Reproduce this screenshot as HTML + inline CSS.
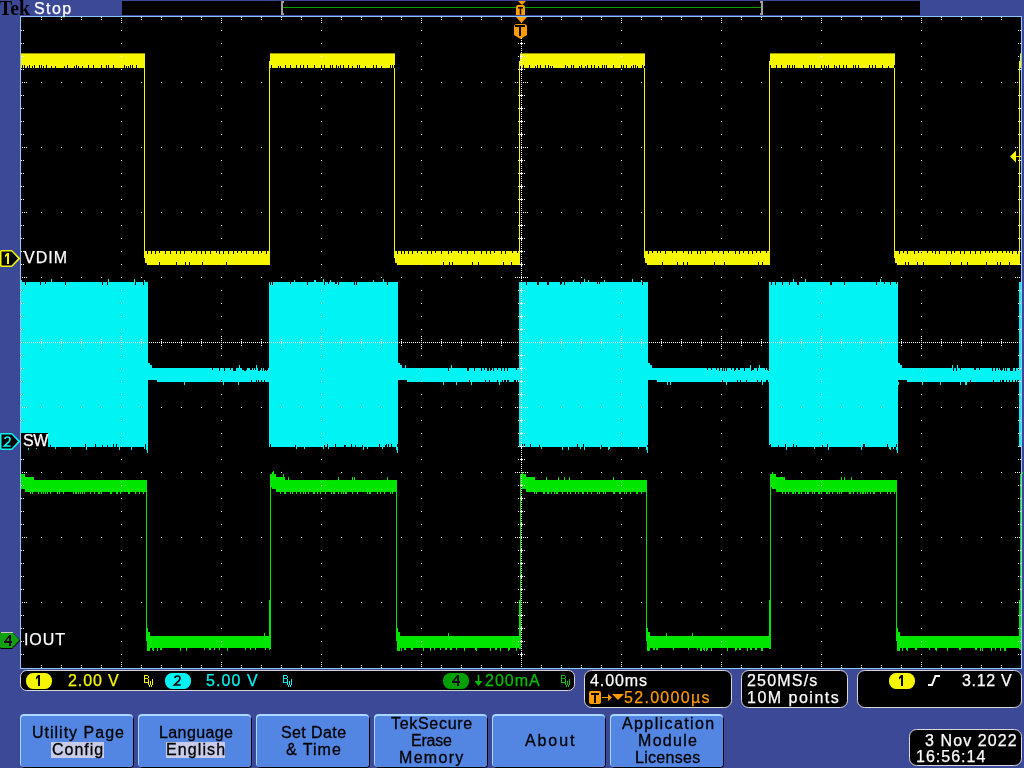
<!DOCTYPE html>
<html><head><meta charset="utf-8"><style>
html,body{margin:0;padding:0;}
body{width:1024px;height:768px;overflow:hidden;background:#3b4996;position:relative;}
svg{position:absolute;left:0;top:0;}
</style></head><body>
<svg width="1024" height="768" shape-rendering="crispEdges">
<rect x="122" y="1" width="798" height="14" fill="#000"/>
<rect x="283" y="7" width="478" height="1" fill="#00a000"/>
<path fill="#a49c98" d="M281 1h2v14h-2zM283 1h1v2h-1zM283 13h1v2h-1zM761 1h2v14h-2zM760 1h1v2h-1zM760 13h1v2h-1z"/>
<rect x="20" y="16" width="1002" height="653" fill="#8ec8f8"/>
<rect x="21" y="17" width="1000" height="651" fill="#000"/>
<path fill="#f6f600" d="M21 54h124v14h-124zM270 54h125v14h-125zM520 54h125v14h-125zM770 54h125v14h-125zM1020 54h1v14h-1zM146 251h123v14h-123zM396 251h123v14h-123zM646 251h123v14h-123zM896 251h123v14h-123zM144 54h1v204h-1zM145 251h1v12h-1zM394 54h1v204h-1zM395 251h1v12h-1zM644 54h1v204h-1zM645 251h1v12h-1zM894 54h1v204h-1zM895 251h1v12h-1zM269 61h1v204h-1zM270 56h1v5h-1zM270 54h1v2h-1zM519 61h1v204h-1zM520 56h1v5h-1zM520 54h1v2h-1zM769 61h1v204h-1zM770 56h1v5h-1zM770 54h1v2h-1zM1019 61h1v204h-1zM1020 56h1v5h-1zM1020 54h1v2h-1z"/>
<path fill="#9a9a00" d="M21 53h124v1h-124zM270 53h125v1h-125zM520 53h125v1h-125zM770 53h125v1h-125zM1020 53h1v1h-1z"/>
<path fill="#000" d="M22 65h1v3h-1zM24 65h1v3h-1zM27 66h1v2h-1zM29 65h1v3h-1zM32 66h1v2h-1zM34 65h1v3h-1zM39 65h1v3h-1zM41 65h1v3h-1zM43 66h1v2h-1zM46 65h1v3h-1zM51 66h1v2h-1zM55 66h1v2h-1zM64 66h1v2h-1zM67 65h1v3h-1zM74 66h1v2h-1zM76 65h1v3h-1zM78 66h1v2h-1zM82 66h1v2h-1zM88 65h1v3h-1zM93 65h1v3h-1zM101 65h1v3h-1zM106 65h1v3h-1zM108 65h1v3h-1zM113 65h1v3h-1zM124 65h1v3h-1zM126 66h1v2h-1zM128 66h1v2h-1zM130 65h1v3h-1zM132 65h1v3h-1zM136 65h1v3h-1zM271 65h1v3h-1zM278 66h1v2h-1zM280 66h1v2h-1zM285 65h1v3h-1zM290 65h1v3h-1zM296 65h1v3h-1zM300 65h1v3h-1zM303 65h1v3h-1zM307 65h1v3h-1zM314 65h1v3h-1zM321 65h1v3h-1zM324 65h1v3h-1zM330 65h1v3h-1zM332 65h1v3h-1zM336 65h1v3h-1zM338 66h1v2h-1zM340 65h1v3h-1zM343 65h1v3h-1zM348 65h1v3h-1zM352 66h1v2h-1zM357 65h1v3h-1zM359 65h1v3h-1zM365 66h1v2h-1zM373 65h1v3h-1zM376 65h1v3h-1zM381 66h1v2h-1zM390 65h1v3h-1zM392 65h1v3h-1zM394 65h1v3h-1zM520 66h1v2h-1zM523 65h1v3h-1zM529 65h1v3h-1zM535 66h1v2h-1zM537 65h1v3h-1zM540 65h1v3h-1zM545 65h1v3h-1zM548 65h1v3h-1zM550 66h1v2h-1zM552 66h1v2h-1zM565 65h1v3h-1zM567 66h1v2h-1zM571 65h1v3h-1zM573 65h1v3h-1zM579 66h1v2h-1zM581 65h1v3h-1zM585 66h1v2h-1zM587 65h1v3h-1zM591 65h1v3h-1zM594 65h1v3h-1zM598 66h1v2h-1zM602 65h1v3h-1zM604 65h1v3h-1zM606 65h1v3h-1zM613 65h1v3h-1zM621 65h1v3h-1zM623 65h1v3h-1zM626 65h1v3h-1zM631 66h1v2h-1zM633 65h1v3h-1zM635 65h1v3h-1zM637 66h1v2h-1zM642 65h1v3h-1zM644 66h1v2h-1zM770 65h1v3h-1zM776 65h1v3h-1zM781 65h1v3h-1zM787 65h1v3h-1zM789 65h1v3h-1zM792 65h1v3h-1zM794 65h1v3h-1zM803 65h1v3h-1zM809 65h1v3h-1zM811 65h1v3h-1zM814 65h1v3h-1zM821 65h1v3h-1zM824 65h1v3h-1zM826 66h1v2h-1zM828 65h1v3h-1zM834 65h1v3h-1zM836 66h1v2h-1zM839 65h1v3h-1zM843 65h1v3h-1zM846 65h1v3h-1zM853 65h1v3h-1zM855 65h1v3h-1zM858 65h1v3h-1zM869 65h1v3h-1zM872 65h1v3h-1zM875 65h1v3h-1zM882 65h1v3h-1zM888 66h1v2h-1zM894 65h1v3h-1zM147 251h1v3h-1zM151 251h1v3h-1zM155 251h1v3h-1zM159 251h1v2h-1zM165 251h1v3h-1zM170 251h1v3h-1zM176 251h1v3h-1zM180 251h1v3h-1zM184 251h1v3h-1zM191 251h1v2h-1zM196 251h1v3h-1zM201 251h1v3h-1zM205 251h1v3h-1zM210 251h1v3h-1zM216 251h1v2h-1zM219 251h1v3h-1zM223 251h1v3h-1zM228 251h1v3h-1zM233 251h1v3h-1zM237 251h1v2h-1zM241 251h1v2h-1zM246 251h1v3h-1zM253 251h1v3h-1zM258 251h1v3h-1zM261 251h1v2h-1zM266 251h1v3h-1zM159 262h1v3h-1zM176 262h1v3h-1zM185 262h1v3h-1zM189 262h1v3h-1zM202 262h1v3h-1zM226 262h1v3h-1zM397 251h1v3h-1zM401 251h1v3h-1zM404 251h1v3h-1zM408 251h1v3h-1zM412 251h1v3h-1zM417 251h1v2h-1zM421 251h1v3h-1zM427 251h1v3h-1zM431 251h1v3h-1zM435 251h1v2h-1zM441 251h1v3h-1zM448 251h1v3h-1zM451 251h1v2h-1zM458 251h1v2h-1zM461 251h1v3h-1zM467 251h1v3h-1zM474 251h1v3h-1zM481 251h1v3h-1zM486 251h1v3h-1zM490 251h1v3h-1zM494 251h1v2h-1zM501 251h1v3h-1zM505 251h1v3h-1zM512 251h1v2h-1zM517 251h1v2h-1zM443 262h1v3h-1zM449 262h1v3h-1zM452 262h1v3h-1zM472 262h1v3h-1zM478 262h1v3h-1zM503 262h1v3h-1zM511 262h1v3h-1zM648 251h1v3h-1zM652 251h1v2h-1zM657 251h1v2h-1zM660 251h1v2h-1zM665 251h1v3h-1zM672 251h1v2h-1zM676 251h1v2h-1zM683 251h1v2h-1zM688 251h1v3h-1zM691 251h1v3h-1zM697 251h1v3h-1zM700 251h1v3h-1zM705 251h1v3h-1zM712 251h1v2h-1zM718 251h1v2h-1zM723 251h1v3h-1zM728 251h1v2h-1zM735 251h1v3h-1zM739 251h1v3h-1zM743 251h1v2h-1zM748 251h1v3h-1zM752 251h1v3h-1zM756 251h1v2h-1zM760 251h1v2h-1zM766 251h1v2h-1zM662 262h1v3h-1zM677 262h1v3h-1zM683 262h1v3h-1zM687 262h1v3h-1zM714 262h1v3h-1zM724 262h1v3h-1zM758 262h1v3h-1zM762 262h1v3h-1zM899 251h1v3h-1zM903 251h1v2h-1zM907 251h1v3h-1zM914 251h1v3h-1zM918 251h1v2h-1zM921 251h1v2h-1zM927 251h1v2h-1zM932 251h1v2h-1zM935 251h1v3h-1zM939 251h1v3h-1zM946 251h1v3h-1zM951 251h1v3h-1zM954 251h1v2h-1zM960 251h1v3h-1zM964 251h1v3h-1zM970 251h1v3h-1zM975 251h1v3h-1zM980 251h1v3h-1zM985 251h1v2h-1zM989 251h1v2h-1zM992 251h1v2h-1zM997 251h1v2h-1zM1002 251h1v2h-1zM1006 251h1v2h-1zM1009 251h1v2h-1zM1012 251h1v3h-1zM1017 251h1v3h-1zM905 262h1v3h-1zM908 262h1v3h-1zM917 262h1v3h-1zM923 262h1v3h-1zM950 262h1v3h-1zM961 262h1v3h-1zM967 262h1v3h-1zM986 262h1v3h-1zM997 262h1v3h-1zM1000 262h1v3h-1zM1009 262h1v3h-1zM146 263h1v2h-1zM396 263h1v2h-1zM646 263h1v2h-1zM896 263h1v2h-1z"/>
<path fill="#00f4f4" d="M21 282h127v165h-127zM21 280h1v2h-1zM28 447h1v3h-1zM36 447h1v2h-1zM51 279h1v3h-1zM55 447h1v2h-1zM70 447h1v2h-1zM86 447h1v3h-1zM108 279h1v3h-1zM119 447h1v3h-1zM131 447h1v3h-1zM134 279h1v3h-1zM144 280h1v2h-1zM144 447h1v2h-1zM147 440h1v13h-1zM146 444h1v6h-1zM269 282h129v165h-129zM294 280h1v2h-1zM296 447h1v2h-1zM304 447h1v2h-1zM314 280h1v2h-1zM315 280h1v2h-1zM323 279h1v3h-1zM323 447h1v2h-1zM328 447h1v2h-1zM330 280h1v2h-1zM363 447h1v3h-1zM367 447h1v2h-1zM373 280h1v2h-1zM382 447h1v2h-1zM383 279h1v3h-1zM397 440h1v13h-1zM396 444h1v6h-1zM519 282h129v165h-129zM541 447h1v2h-1zM562 447h1v3h-1zM568 447h1v3h-1zM573 280h1v2h-1zM580 447h1v2h-1zM584 279h1v3h-1zM584 447h1v3h-1zM588 280h1v2h-1zM600 447h1v2h-1zM604 280h1v2h-1zM608 447h1v3h-1zM609 447h1v2h-1zM632 279h1v3h-1zM638 447h1v2h-1zM641 280h1v2h-1zM647 440h1v13h-1zM646 444h1v6h-1zM769 282h129v165h-129zM786 447h1v3h-1zM793 279h1v3h-1zM805 279h1v3h-1zM814 447h1v2h-1zM828 447h1v3h-1zM861 447h1v3h-1zM880 279h1v3h-1zM889 447h1v2h-1zM890 447h1v3h-1zM893 447h1v2h-1zM897 440h1v13h-1zM896 444h1v6h-1zM1019 282h2v165h-2zM148 363h1v17h-1zM149 363h1v17h-1zM150 365h1v15h-1zM151 365h1v15h-1zM151 365h1v3h-1zM152 368h1v12h-1zM153 368h1v12h-1zM154 368h1v12h-1zM155 368h1v12h-1zM156 368h1v12h-1zM157 368h1v14h-1zM158 368h1v14h-1zM159 368h1v14h-1zM160 368h1v14h-1zM161 368h1v14h-1zM162 368h1v14h-1zM163 368h1v14h-1zM164 368h1v14h-1zM165 368h1v14h-1zM166 368h1v14h-1zM167 368h1v14h-1zM168 368h1v14h-1zM169 368h1v14h-1zM170 368h1v14h-1zM171 368h1v14h-1zM172 368h1v14h-1zM173 368h1v14h-1zM174 368h1v14h-1zM175 368h1v14h-1zM176 368h1v14h-1zM177 368h1v14h-1zM178 368h1v14h-1zM179 368h1v14h-1zM180 368h1v14h-1zM181 368h1v14h-1zM182 368h1v14h-1zM183 368h1v14h-1zM184 368h1v14h-1zM184 382h1v3h-1zM185 368h1v14h-1zM186 368h1v14h-1zM187 368h1v14h-1zM188 368h1v14h-1zM189 368h1v14h-1zM190 368h1v14h-1zM191 368h1v14h-1zM192 368h1v14h-1zM193 368h1v14h-1zM194 368h1v14h-1zM195 368h1v14h-1zM196 368h1v14h-1zM197 368h1v14h-1zM198 368h1v14h-1zM199 368h1v14h-1zM200 368h1v14h-1zM201 368h1v14h-1zM202 368h1v14h-1zM203 368h1v14h-1zM204 368h1v14h-1zM205 368h1v14h-1zM206 368h1v14h-1zM207 368h1v14h-1zM208 368h1v14h-1zM209 368h1v14h-1zM210 368h1v14h-1zM211 368h1v14h-1zM212 368h1v14h-1zM213 368h1v14h-1zM214 368h1v14h-1zM215 368h1v14h-1zM216 368h1v14h-1zM217 368h1v14h-1zM218 368h1v14h-1zM219 368h1v14h-1zM220 368h1v14h-1zM221 368h1v14h-1zM222 368h1v14h-1zM223 368h1v14h-1zM223 382h1v3h-1zM224 368h1v14h-1zM225 368h1v14h-1zM226 368h1v14h-1zM227 368h1v14h-1zM228 368h1v14h-1zM229 368h1v14h-1zM230 368h1v14h-1zM231 368h1v14h-1zM232 368h1v14h-1zM233 368h1v14h-1zM234 368h1v14h-1zM235 368h1v14h-1zM236 368h1v14h-1zM237 368h1v14h-1zM238 368h1v14h-1zM238 382h1v3h-1zM239 368h1v14h-1zM239 365h1v3h-1zM240 368h1v14h-1zM241 368h1v14h-1zM242 368h1v14h-1zM243 368h1v14h-1zM244 368h1v14h-1zM245 368h1v14h-1zM246 368h1v14h-1zM247 368h1v14h-1zM248 368h1v14h-1zM249 368h1v14h-1zM250 368h1v14h-1zM251 368h1v14h-1zM252 368h1v14h-1zM253 368h1v14h-1zM254 368h1v14h-1zM255 368h1v14h-1zM256 368h1v14h-1zM256 365h1v3h-1zM257 368h1v14h-1zM258 368h1v14h-1zM259 368h1v14h-1zM260 368h1v14h-1zM261 368h1v14h-1zM262 368h1v14h-1zM263 368h1v14h-1zM264 368h1v14h-1zM265 368h1v14h-1zM266 368h1v14h-1zM267 368h1v14h-1zM268 368h1v14h-1zM398 363h1v17h-1zM399 363h1v17h-1zM400 365h1v15h-1zM401 365h1v15h-1zM402 368h1v12h-1zM403 368h1v12h-1zM404 368h1v12h-1zM405 368h1v12h-1zM405 365h1v3h-1zM406 368h1v12h-1zM407 368h1v14h-1zM408 368h1v14h-1zM409 368h1v14h-1zM410 368h1v14h-1zM411 368h1v14h-1zM412 368h1v14h-1zM413 368h1v14h-1zM414 368h1v14h-1zM415 368h1v14h-1zM416 368h1v14h-1zM417 368h1v14h-1zM418 368h1v14h-1zM419 368h1v14h-1zM420 368h1v14h-1zM421 368h1v14h-1zM422 368h1v14h-1zM423 368h1v14h-1zM424 368h1v14h-1zM425 368h1v14h-1zM426 368h1v14h-1zM427 368h1v14h-1zM428 368h1v14h-1zM429 368h1v14h-1zM430 368h1v14h-1zM431 368h1v14h-1zM432 368h1v14h-1zM433 368h1v14h-1zM434 368h1v14h-1zM435 368h1v14h-1zM436 368h1v14h-1zM437 368h1v14h-1zM438 368h1v14h-1zM439 368h1v14h-1zM440 368h1v14h-1zM441 368h1v14h-1zM442 368h1v14h-1zM443 368h1v14h-1zM443 382h1v3h-1zM444 368h1v14h-1zM445 368h1v14h-1zM446 368h1v14h-1zM447 368h1v14h-1zM448 368h1v14h-1zM449 368h1v14h-1zM450 368h1v14h-1zM451 368h1v14h-1zM451 365h1v3h-1zM452 368h1v14h-1zM453 368h1v14h-1zM454 368h1v14h-1zM455 368h1v14h-1zM456 368h1v14h-1zM456 382h1v3h-1zM457 368h1v14h-1zM458 368h1v14h-1zM459 368h1v14h-1zM460 368h1v14h-1zM461 368h1v14h-1zM462 368h1v14h-1zM463 368h1v14h-1zM464 368h1v14h-1zM465 368h1v14h-1zM466 368h1v14h-1zM467 368h1v14h-1zM468 368h1v14h-1zM469 368h1v14h-1zM470 368h1v14h-1zM471 368h1v14h-1zM471 382h1v3h-1zM472 368h1v14h-1zM473 368h1v14h-1zM474 368h1v14h-1zM475 368h1v14h-1zM476 368h1v14h-1zM477 368h1v14h-1zM478 368h1v14h-1zM479 368h1v14h-1zM480 368h1v14h-1zM481 368h1v14h-1zM482 368h1v14h-1zM483 368h1v14h-1zM484 368h1v14h-1zM485 368h1v14h-1zM486 368h1v14h-1zM487 368h1v14h-1zM488 368h1v14h-1zM489 368h1v14h-1zM490 368h1v14h-1zM491 368h1v14h-1zM492 368h1v14h-1zM493 368h1v14h-1zM494 368h1v14h-1zM495 368h1v14h-1zM496 368h1v14h-1zM497 368h1v14h-1zM498 368h1v14h-1zM499 368h1v14h-1zM499 382h1v3h-1zM500 368h1v14h-1zM501 368h1v14h-1zM502 368h1v14h-1zM503 368h1v14h-1zM504 368h1v14h-1zM505 368h1v14h-1zM506 368h1v14h-1zM507 368h1v14h-1zM508 368h1v14h-1zM509 368h1v14h-1zM510 368h1v14h-1zM511 368h1v14h-1zM512 368h1v14h-1zM513 368h1v14h-1zM514 368h1v14h-1zM515 368h1v14h-1zM516 368h1v14h-1zM517 368h1v14h-1zM518 368h1v14h-1zM648 363h1v17h-1zM649 363h1v17h-1zM650 365h1v15h-1zM651 365h1v15h-1zM652 368h1v12h-1zM653 368h1v12h-1zM654 368h1v12h-1zM655 368h1v12h-1zM656 368h1v12h-1zM657 368h1v14h-1zM658 368h1v14h-1zM659 368h1v14h-1zM660 368h1v14h-1zM661 368h1v14h-1zM662 368h1v14h-1zM663 368h1v14h-1zM664 368h1v14h-1zM665 368h1v14h-1zM666 368h1v14h-1zM667 368h1v14h-1zM667 382h1v3h-1zM668 368h1v14h-1zM669 368h1v14h-1zM670 368h1v14h-1zM670 382h1v3h-1zM671 368h1v14h-1zM672 368h1v14h-1zM673 368h1v14h-1zM674 368h1v14h-1zM675 368h1v14h-1zM676 368h1v14h-1zM677 368h1v14h-1zM678 368h1v14h-1zM679 368h1v14h-1zM680 368h1v14h-1zM681 368h1v14h-1zM682 368h1v14h-1zM683 368h1v14h-1zM684 368h1v14h-1zM685 368h1v14h-1zM686 368h1v14h-1zM687 368h1v14h-1zM688 368h1v14h-1zM689 368h1v14h-1zM690 368h1v14h-1zM691 368h1v14h-1zM692 368h1v14h-1zM693 368h1v14h-1zM694 368h1v14h-1zM695 368h1v14h-1zM696 368h1v14h-1zM697 368h1v14h-1zM698 368h1v14h-1zM699 368h1v14h-1zM700 368h1v14h-1zM701 368h1v14h-1zM702 368h1v14h-1zM703 368h1v14h-1zM704 368h1v14h-1zM705 368h1v14h-1zM706 368h1v14h-1zM707 368h1v14h-1zM708 368h1v14h-1zM709 368h1v14h-1zM710 368h1v14h-1zM711 368h1v14h-1zM712 368h1v14h-1zM713 368h1v14h-1zM714 368h1v14h-1zM715 368h1v14h-1zM716 368h1v14h-1zM717 368h1v14h-1zM718 368h1v14h-1zM719 368h1v14h-1zM720 368h1v14h-1zM721 368h1v14h-1zM722 368h1v14h-1zM723 368h1v14h-1zM724 368h1v14h-1zM725 368h1v14h-1zM726 368h1v14h-1zM726 382h1v3h-1zM727 368h1v14h-1zM728 368h1v14h-1zM729 368h1v14h-1zM730 368h1v14h-1zM731 368h1v14h-1zM732 368h1v14h-1zM733 368h1v14h-1zM734 368h1v14h-1zM735 368h1v14h-1zM736 368h1v14h-1zM737 368h1v14h-1zM738 368h1v14h-1zM739 368h1v14h-1zM740 368h1v14h-1zM741 368h1v14h-1zM742 368h1v14h-1zM743 368h1v14h-1zM744 368h1v14h-1zM745 368h1v14h-1zM746 368h1v14h-1zM747 368h1v14h-1zM748 368h1v14h-1zM749 368h1v14h-1zM750 368h1v14h-1zM750 365h1v3h-1zM751 368h1v14h-1zM752 368h1v14h-1zM753 368h1v14h-1zM754 368h1v14h-1zM755 368h1v14h-1zM756 368h1v14h-1zM757 368h1v14h-1zM758 368h1v14h-1zM759 368h1v14h-1zM759 365h1v3h-1zM760 368h1v14h-1zM761 368h1v14h-1zM762 368h1v14h-1zM762 382h1v3h-1zM763 368h1v14h-1zM764 368h1v14h-1zM765 368h1v14h-1zM766 368h1v14h-1zM767 368h1v14h-1zM768 368h1v14h-1zM898 363h1v17h-1zM898 382h1v3h-1zM899 363h1v17h-1zM900 365h1v15h-1zM901 365h1v15h-1zM902 368h1v12h-1zM903 368h1v12h-1zM904 368h1v12h-1zM905 368h1v12h-1zM906 368h1v12h-1zM907 368h1v14h-1zM908 368h1v14h-1zM909 368h1v14h-1zM910 368h1v14h-1zM911 368h1v14h-1zM912 368h1v14h-1zM913 368h1v14h-1zM914 368h1v14h-1zM915 368h1v14h-1zM916 368h1v14h-1zM917 368h1v14h-1zM918 368h1v14h-1zM919 368h1v14h-1zM920 368h1v14h-1zM921 368h1v14h-1zM922 368h1v14h-1zM922 382h1v3h-1zM923 368h1v14h-1zM924 368h1v14h-1zM925 368h1v14h-1zM926 368h1v14h-1zM927 368h1v14h-1zM928 368h1v14h-1zM929 368h1v14h-1zM930 368h1v14h-1zM931 368h1v14h-1zM932 368h1v14h-1zM933 368h1v14h-1zM934 368h1v14h-1zM935 368h1v14h-1zM936 368h1v14h-1zM937 368h1v14h-1zM938 368h1v14h-1zM939 368h1v14h-1zM940 368h1v14h-1zM940 382h1v3h-1zM941 368h1v14h-1zM942 368h1v14h-1zM943 368h1v14h-1zM944 368h1v14h-1zM945 368h1v14h-1zM946 368h1v14h-1zM947 368h1v14h-1zM948 368h1v14h-1zM949 368h1v14h-1zM950 368h1v14h-1zM951 368h1v14h-1zM952 368h1v14h-1zM952 365h1v3h-1zM953 368h1v14h-1zM954 368h1v14h-1zM955 368h1v14h-1zM956 368h1v14h-1zM957 368h1v14h-1zM957 365h1v3h-1zM958 368h1v14h-1zM959 368h1v14h-1zM960 368h1v14h-1zM960 382h1v3h-1zM961 368h1v14h-1zM962 368h1v14h-1zM963 368h1v14h-1zM964 368h1v14h-1zM965 368h1v14h-1zM965 382h1v3h-1zM966 368h1v14h-1zM966 382h1v3h-1zM967 368h1v14h-1zM968 368h1v14h-1zM969 368h1v14h-1zM970 368h1v14h-1zM971 368h1v14h-1zM972 368h1v14h-1zM973 368h1v14h-1zM974 368h1v14h-1zM975 368h1v14h-1zM976 368h1v14h-1zM977 368h1v14h-1zM978 368h1v14h-1zM979 368h1v14h-1zM980 368h1v14h-1zM981 368h1v14h-1zM982 368h1v14h-1zM983 368h1v14h-1zM984 368h1v14h-1zM985 368h1v14h-1zM986 368h1v14h-1zM987 368h1v14h-1zM988 368h1v14h-1zM989 368h1v14h-1zM990 368h1v14h-1zM991 368h1v14h-1zM992 368h1v14h-1zM993 368h1v14h-1zM994 368h1v14h-1zM995 368h1v14h-1zM996 368h1v14h-1zM997 368h1v14h-1zM998 368h1v14h-1zM999 368h1v14h-1zM1000 368h1v14h-1zM1001 368h1v14h-1zM1002 368h1v14h-1zM1003 368h1v14h-1zM1004 368h1v14h-1zM1005 368h1v14h-1zM1006 368h1v14h-1zM1007 368h1v14h-1zM1008 368h1v14h-1zM1009 368h1v14h-1zM1010 368h1v14h-1zM1011 368h1v14h-1zM1012 368h1v14h-1zM1013 368h1v14h-1zM1014 368h1v14h-1zM1015 368h1v14h-1zM1016 368h1v14h-1zM1017 368h1v14h-1zM1018 368h1v14h-1z"/>
<path fill="#000" d="M24 445h1v2h-1zM25 282h1v3h-1zM25 444h1v3h-1zM35 444h1v3h-1zM40 282h1v3h-1zM45 282h1v2h-1zM50 445h1v2h-1zM65 282h1v3h-1zM85 444h1v3h-1zM95 444h1v3h-1zM102 282h1v3h-1zM102 445h1v2h-1zM107 282h1v3h-1zM107 445h1v2h-1zM113 444h1v3h-1zM116 444h1v3h-1zM135 282h1v3h-1zM143 282h1v3h-1zM145 444h1v3h-1zM270 282h1v3h-1zM270 444h1v3h-1zM272 282h1v3h-1zM290 282h1v2h-1zM295 445h1v2h-1zM307 282h1v3h-1zM324 282h1v3h-1zM324 445h1v2h-1zM327 444h1v3h-1zM328 282h1v2h-1zM335 282h1v2h-1zM335 444h1v3h-1zM336 282h1v2h-1zM338 282h1v3h-1zM344 445h1v2h-1zM345 445h1v2h-1zM351 444h1v3h-1zM354 282h1v3h-1zM355 445h1v2h-1zM356 282h1v3h-1zM362 445h1v2h-1zM379 444h1v3h-1zM385 445h1v2h-1zM386 444h1v3h-1zM387 282h1v3h-1zM388 444h1v3h-1zM391 444h1v3h-1zM397 444h1v3h-1zM522 444h1v3h-1zM524 444h1v3h-1zM526 282h1v3h-1zM530 444h1v3h-1zM537 282h1v3h-1zM538 282h1v3h-1zM539 445h1v2h-1zM547 282h1v3h-1zM548 282h1v3h-1zM560 282h1v3h-1zM561 282h1v2h-1zM564 282h1v3h-1zM577 444h1v3h-1zM580 282h1v2h-1zM583 444h1v3h-1zM597 282h1v2h-1zM599 282h1v2h-1zM601 445h1v2h-1zM642 282h1v3h-1zM647 445h1v2h-1zM769 445h1v2h-1zM770 444h1v3h-1zM771 282h1v3h-1zM775 282h1v3h-1zM778 445h1v2h-1zM782 282h1v3h-1zM785 444h1v3h-1zM789 282h1v3h-1zM793 444h1v3h-1zM796 445h1v2h-1zM797 282h1v3h-1zM798 282h1v3h-1zM822 445h1v2h-1zM827 444h1v3h-1zM830 282h1v3h-1zM831 282h1v3h-1zM844 282h1v3h-1zM863 444h1v3h-1zM864 444h1v3h-1zM876 282h1v3h-1zM884 282h1v2h-1zM887 444h1v3h-1zM890 282h1v3h-1zM896 282h1v2h-1zM896 444h1v3h-1zM212 368h1v2h-1zM219 368h1v3h-1zM221 380h1v2h-1zM224 368h1v3h-1zM230 368h1v2h-1zM233 368h1v3h-1zM234 368h1v3h-1zM235 368h1v3h-1zM242 368h1v2h-1zM243 368h1v2h-1zM244 368h1v3h-1zM245 368h1v3h-1zM246 368h1v2h-1zM250 368h1v2h-1zM251 368h1v2h-1zM251 380h1v2h-1zM253 368h1v2h-1zM255 368h1v2h-1zM256 380h1v2h-1zM258 368h1v3h-1zM258 380h1v2h-1zM259 368h1v3h-1zM260 368h1v2h-1zM261 380h1v2h-1zM262 368h1v3h-1zM264 368h1v3h-1zM264 380h1v2h-1zM265 368h1v2h-1zM266 368h1v3h-1zM267 368h1v2h-1zM448 368h1v3h-1zM467 368h1v3h-1zM468 368h1v3h-1zM469 380h1v2h-1zM474 368h1v3h-1zM481 368h1v3h-1zM484 368h1v2h-1zM485 380h1v2h-1zM487 368h1v3h-1zM488 368h1v3h-1zM489 380h1v2h-1zM490 368h1v3h-1zM491 368h1v2h-1zM493 368h1v3h-1zM497 368h1v2h-1zM497 380h1v2h-1zM501 368h1v3h-1zM502 380h1v2h-1zM504 368h1v3h-1zM504 380h1v2h-1zM505 380h1v2h-1zM507 368h1v3h-1zM507 380h1v2h-1zM508 380h1v2h-1zM514 380h1v2h-1zM515 380h1v2h-1zM516 368h1v2h-1zM517 380h1v2h-1zM707 368h1v2h-1zM711 368h1v2h-1zM716 368h1v2h-1zM719 368h1v3h-1zM722 368h1v3h-1zM722 380h1v2h-1zM724 368h1v3h-1zM726 368h1v3h-1zM731 368h1v2h-1zM734 368h1v3h-1zM735 368h1v2h-1zM737 380h1v2h-1zM738 368h1v2h-1zM739 368h1v2h-1zM740 380h1v2h-1zM744 368h1v3h-1zM746 380h1v2h-1zM751 368h1v3h-1zM752 368h1v2h-1zM753 368h1v2h-1zM757 368h1v3h-1zM757 380h1v2h-1zM761 380h1v2h-1zM765 368h1v2h-1zM766 380h1v2h-1zM767 368h1v2h-1zM767 380h1v2h-1zM768 368h1v3h-1zM953 368h1v3h-1zM956 368h1v3h-1zM960 368h1v2h-1zM970 380h1v2h-1zM974 368h1v2h-1zM975 368h1v2h-1zM979 368h1v2h-1zM992 368h1v3h-1zM993 380h1v2h-1zM995 368h1v3h-1zM998 368h1v2h-1zM1000 368h1v2h-1zM1000 380h1v2h-1zM1001 368h1v3h-1zM1002 368h1v2h-1zM1002 380h1v2h-1zM1003 380h1v2h-1zM1004 368h1v3h-1zM1006 368h1v3h-1zM1006 380h1v2h-1zM1009 380h1v2h-1zM1010 368h1v3h-1zM1011 368h1v3h-1zM1012 368h1v3h-1zM1012 380h1v2h-1zM1015 368h1v3h-1zM1015 380h1v2h-1zM1017 380h1v2h-1zM1018 368h1v2h-1zM1018 380h1v2h-1z"/>
<path fill="#00e600" d="M21 474h1v15h-1zM22 474h1v15h-1zM23 474h1v15h-1zM24 474h1v15h-1zM25 477h1v15h-1zM26 477h1v15h-1zM27 477h1v15h-1zM28 477h1v15h-1zM29 477h1v15h-1zM30 477h1v15h-1zM30 492h1v2h-1zM31 477h1v15h-1zM32 477h1v15h-1zM32 492h1v2h-1zM33 477h1v15h-1zM34 480h1v12h-1zM35 480h1v12h-1zM36 480h1v12h-1zM37 480h1v12h-1zM38 480h1v12h-1zM38 492h1v2h-1zM39 480h1v12h-1zM40 480h1v12h-1zM41 480h1v12h-1zM41 492h1v2h-1zM42 480h1v12h-1zM43 480h1v12h-1zM43 492h1v2h-1zM44 480h1v12h-1zM45 480h1v12h-1zM45 492h1v2h-1zM46 480h1v12h-1zM47 480h1v12h-1zM47 492h1v2h-1zM48 480h1v12h-1zM49 480h1v12h-1zM50 480h1v12h-1zM50 492h1v2h-1zM51 480h1v12h-1zM52 480h1v12h-1zM53 480h1v12h-1zM54 480h1v12h-1zM55 480h1v12h-1zM56 480h1v12h-1zM57 480h1v12h-1zM57 492h1v2h-1zM58 480h1v12h-1zM59 480h1v12h-1zM59 492h1v2h-1zM60 480h1v12h-1zM61 480h1v12h-1zM62 480h1v12h-1zM63 480h1v12h-1zM63 492h1v2h-1zM64 480h1v12h-1zM65 480h1v12h-1zM66 480h1v12h-1zM67 480h1v12h-1zM68 480h1v12h-1zM69 480h1v12h-1zM70 480h1v12h-1zM71 480h1v12h-1zM72 480h1v12h-1zM73 480h1v12h-1zM73 492h1v2h-1zM74 480h1v12h-1zM75 480h1v12h-1zM75 492h1v2h-1zM76 480h1v12h-1zM76 492h1v2h-1zM77 480h1v12h-1zM78 480h1v12h-1zM78 492h1v2h-1zM79 480h1v12h-1zM80 480h1v12h-1zM80 492h1v2h-1zM81 480h1v12h-1zM82 480h1v12h-1zM82 492h1v2h-1zM83 480h1v12h-1zM84 480h1v12h-1zM84 492h1v2h-1zM85 480h1v12h-1zM86 480h1v12h-1zM87 480h1v12h-1zM88 480h1v12h-1zM89 480h1v12h-1zM90 480h1v12h-1zM90 492h1v2h-1zM91 480h1v12h-1zM92 480h1v12h-1zM93 480h1v12h-1zM94 480h1v12h-1zM94 492h1v2h-1zM95 480h1v12h-1zM96 480h1v12h-1zM97 480h1v12h-1zM98 480h1v12h-1zM98 492h1v2h-1zM99 480h1v12h-1zM99 492h1v2h-1zM100 480h1v12h-1zM101 480h1v12h-1zM101 492h1v2h-1zM102 480h1v12h-1zM103 480h1v12h-1zM104 480h1v12h-1zM105 480h1v12h-1zM106 480h1v12h-1zM107 480h1v12h-1zM108 480h1v12h-1zM109 480h1v12h-1zM110 480h1v12h-1zM110 492h1v2h-1zM111 480h1v12h-1zM111 492h1v2h-1zM112 480h1v12h-1zM113 480h1v12h-1zM114 480h1v12h-1zM115 480h1v12h-1zM116 480h1v12h-1zM116 492h1v2h-1zM117 480h1v12h-1zM117 492h1v2h-1zM118 480h1v12h-1zM119 480h1v12h-1zM120 480h1v12h-1zM120 492h1v2h-1zM121 480h1v12h-1zM122 480h1v12h-1zM123 480h1v12h-1zM124 480h1v12h-1zM125 480h1v12h-1zM126 480h1v12h-1zM127 480h1v12h-1zM128 480h1v12h-1zM128 492h1v2h-1zM129 480h1v12h-1zM129 492h1v2h-1zM130 480h1v12h-1zM131 480h1v12h-1zM132 480h1v12h-1zM133 480h1v12h-1zM134 480h1v12h-1zM135 480h1v12h-1zM135 492h1v2h-1zM136 480h1v12h-1zM137 480h1v12h-1zM138 480h1v12h-1zM139 480h1v12h-1zM139 492h1v2h-1zM140 480h1v12h-1zM141 480h1v12h-1zM142 480h1v12h-1zM143 480h1v12h-1zM143 492h1v2h-1zM144 480h1v12h-1zM145 480h1v12h-1zM146 480h1v12h-1zM271 474h1v13h-1zM272 474h1v15h-1zM273 474h1v15h-1zM273 471h1v3h-1zM274 474h1v15h-1zM275 474h1v15h-1zM276 477h1v15h-1zM277 477h1v15h-1zM278 477h1v15h-1zM279 477h1v15h-1zM280 477h1v15h-1zM280 492h1v2h-1zM281 477h1v15h-1zM282 477h1v15h-1zM283 477h1v15h-1zM283 474h1v3h-1zM284 477h1v15h-1zM284 492h1v2h-1zM285 480h1v12h-1zM285 492h1v2h-1zM286 480h1v12h-1zM287 480h1v12h-1zM288 480h1v12h-1zM288 477h1v3h-1zM289 480h1v12h-1zM290 480h1v12h-1zM290 492h1v2h-1zM291 480h1v12h-1zM292 480h1v12h-1zM292 492h1v2h-1zM293 480h1v12h-1zM294 480h1v12h-1zM295 480h1v12h-1zM296 480h1v12h-1zM296 492h1v2h-1zM297 480h1v12h-1zM298 480h1v12h-1zM299 480h1v12h-1zM300 480h1v12h-1zM300 492h1v2h-1zM301 480h1v12h-1zM302 480h1v12h-1zM303 480h1v12h-1zM303 492h1v2h-1zM304 480h1v12h-1zM305 480h1v12h-1zM305 492h1v2h-1zM306 480h1v12h-1zM307 480h1v12h-1zM308 480h1v12h-1zM308 492h1v2h-1zM309 480h1v12h-1zM310 480h1v12h-1zM311 480h1v12h-1zM312 480h1v12h-1zM313 480h1v12h-1zM313 492h1v2h-1zM314 480h1v12h-1zM314 492h1v2h-1zM315 480h1v12h-1zM316 480h1v12h-1zM317 480h1v12h-1zM317 492h1v2h-1zM318 480h1v12h-1zM319 480h1v12h-1zM320 480h1v12h-1zM320 492h1v2h-1zM321 480h1v12h-1zM322 480h1v12h-1zM323 480h1v12h-1zM324 480h1v12h-1zM325 480h1v12h-1zM325 492h1v2h-1zM326 480h1v12h-1zM327 480h1v12h-1zM328 480h1v12h-1zM329 480h1v12h-1zM330 480h1v12h-1zM331 480h1v12h-1zM331 492h1v2h-1zM332 480h1v12h-1zM333 480h1v12h-1zM333 492h1v2h-1zM334 480h1v12h-1zM334 492h1v2h-1zM335 480h1v12h-1zM336 480h1v12h-1zM337 480h1v12h-1zM338 480h1v12h-1zM338 492h1v2h-1zM338 477h1v3h-1zM339 480h1v12h-1zM340 480h1v12h-1zM341 480h1v12h-1zM341 492h1v2h-1zM342 480h1v12h-1zM343 480h1v12h-1zM343 492h1v2h-1zM344 480h1v12h-1zM345 480h1v12h-1zM345 492h1v2h-1zM346 480h1v12h-1zM346 492h1v2h-1zM347 480h1v12h-1zM348 480h1v12h-1zM349 480h1v12h-1zM350 480h1v12h-1zM351 480h1v12h-1zM352 480h1v12h-1zM352 492h1v2h-1zM352 477h1v3h-1zM353 480h1v12h-1zM354 480h1v12h-1zM354 477h1v3h-1zM355 480h1v12h-1zM356 480h1v12h-1zM357 480h1v12h-1zM357 492h1v2h-1zM358 480h1v12h-1zM359 480h1v12h-1zM360 480h1v12h-1zM361 480h1v12h-1zM362 480h1v12h-1zM363 480h1v12h-1zM364 480h1v12h-1zM365 480h1v12h-1zM366 480h1v12h-1zM367 480h1v12h-1zM367 492h1v2h-1zM368 480h1v12h-1zM369 480h1v12h-1zM369 492h1v2h-1zM370 480h1v12h-1zM370 492h1v2h-1zM371 480h1v12h-1zM372 480h1v12h-1zM373 480h1v12h-1zM374 480h1v12h-1zM375 480h1v12h-1zM376 480h1v12h-1zM377 480h1v12h-1zM377 492h1v2h-1zM378 480h1v12h-1zM379 480h1v12h-1zM380 480h1v12h-1zM380 492h1v2h-1zM381 480h1v12h-1zM382 480h1v12h-1zM383 480h1v12h-1zM384 480h1v12h-1zM384 492h1v2h-1zM385 480h1v12h-1zM386 480h1v12h-1zM387 480h1v12h-1zM387 477h1v3h-1zM388 480h1v12h-1zM389 480h1v12h-1zM390 480h1v12h-1zM390 492h1v2h-1zM391 480h1v12h-1zM392 480h1v12h-1zM392 492h1v2h-1zM393 480h1v12h-1zM394 480h1v12h-1zM395 480h1v12h-1zM396 480h1v12h-1zM521 474h1v13h-1zM522 474h1v15h-1zM523 474h1v15h-1zM524 474h1v15h-1zM525 474h1v15h-1zM526 477h1v15h-1zM527 477h1v15h-1zM528 477h1v15h-1zM529 477h1v15h-1zM530 477h1v15h-1zM531 477h1v15h-1zM532 477h1v15h-1zM533 477h1v15h-1zM534 477h1v15h-1zM534 492h1v2h-1zM535 480h1v12h-1zM536 480h1v12h-1zM536 492h1v2h-1zM537 480h1v12h-1zM538 480h1v12h-1zM539 480h1v12h-1zM540 480h1v12h-1zM541 480h1v12h-1zM542 480h1v12h-1zM543 480h1v12h-1zM543 492h1v2h-1zM544 480h1v12h-1zM544 492h1v2h-1zM545 480h1v12h-1zM546 480h1v12h-1zM546 477h1v3h-1zM547 480h1v12h-1zM547 492h1v2h-1zM548 480h1v12h-1zM548 492h1v2h-1zM549 480h1v12h-1zM550 480h1v12h-1zM551 480h1v12h-1zM551 492h1v2h-1zM552 480h1v12h-1zM553 480h1v12h-1zM554 480h1v12h-1zM554 492h1v2h-1zM555 480h1v12h-1zM556 480h1v12h-1zM556 492h1v2h-1zM557 480h1v12h-1zM557 492h1v2h-1zM558 480h1v12h-1zM558 477h1v3h-1zM559 480h1v12h-1zM560 480h1v12h-1zM561 480h1v12h-1zM562 480h1v12h-1zM562 492h1v2h-1zM563 480h1v12h-1zM564 480h1v12h-1zM564 477h1v3h-1zM565 480h1v12h-1zM566 480h1v12h-1zM567 480h1v12h-1zM567 492h1v2h-1zM568 480h1v12h-1zM569 480h1v12h-1zM569 477h1v3h-1zM570 480h1v12h-1zM570 492h1v2h-1zM571 480h1v12h-1zM572 480h1v12h-1zM573 480h1v12h-1zM574 480h1v12h-1zM575 480h1v12h-1zM575 492h1v2h-1zM576 480h1v12h-1zM577 480h1v12h-1zM578 480h1v12h-1zM578 492h1v2h-1zM579 480h1v12h-1zM580 480h1v12h-1zM581 480h1v12h-1zM582 480h1v12h-1zM582 492h1v2h-1zM583 480h1v12h-1zM583 492h1v2h-1zM584 480h1v12h-1zM585 480h1v12h-1zM586 480h1v12h-1zM587 480h1v12h-1zM587 492h1v2h-1zM588 480h1v12h-1zM589 480h1v12h-1zM590 480h1v12h-1zM591 480h1v12h-1zM591 492h1v2h-1zM592 480h1v12h-1zM593 480h1v12h-1zM594 480h1v12h-1zM595 480h1v12h-1zM596 480h1v12h-1zM597 480h1v12h-1zM597 492h1v2h-1zM598 480h1v12h-1zM599 480h1v12h-1zM599 492h1v2h-1zM600 480h1v12h-1zM601 480h1v12h-1zM602 480h1v12h-1zM603 480h1v12h-1zM603 492h1v2h-1zM604 480h1v12h-1zM605 480h1v12h-1zM605 492h1v2h-1zM606 480h1v12h-1zM607 480h1v12h-1zM608 480h1v12h-1zM609 480h1v12h-1zM610 480h1v12h-1zM611 480h1v12h-1zM612 480h1v12h-1zM613 480h1v12h-1zM613 492h1v2h-1zM613 477h1v3h-1zM614 480h1v12h-1zM614 492h1v2h-1zM615 480h1v12h-1zM616 480h1v12h-1zM617 480h1v12h-1zM618 480h1v12h-1zM619 480h1v12h-1zM619 492h1v2h-1zM620 480h1v12h-1zM620 492h1v2h-1zM621 480h1v12h-1zM622 480h1v12h-1zM623 480h1v12h-1zM624 480h1v12h-1zM624 492h1v2h-1zM625 480h1v12h-1zM626 480h1v12h-1zM626 492h1v2h-1zM627 480h1v12h-1zM628 480h1v12h-1zM629 480h1v12h-1zM630 480h1v12h-1zM630 492h1v2h-1zM631 480h1v12h-1zM632 480h1v12h-1zM633 480h1v12h-1zM634 480h1v12h-1zM635 480h1v12h-1zM636 480h1v12h-1zM636 492h1v2h-1zM637 480h1v12h-1zM637 492h1v2h-1zM638 480h1v12h-1zM639 480h1v12h-1zM640 480h1v12h-1zM641 480h1v12h-1zM641 492h1v2h-1zM642 480h1v12h-1zM643 480h1v12h-1zM644 480h1v12h-1zM645 480h1v12h-1zM646 480h1v12h-1zM646 492h1v2h-1zM771 474h1v13h-1zM772 474h1v15h-1zM773 474h1v15h-1zM774 474h1v15h-1zM775 474h1v15h-1zM776 477h1v15h-1zM777 477h1v15h-1zM778 477h1v15h-1zM779 477h1v15h-1zM780 477h1v15h-1zM781 477h1v15h-1zM782 477h1v15h-1zM782 492h1v2h-1zM783 477h1v15h-1zM784 477h1v15h-1zM785 480h1v12h-1zM785 492h1v2h-1zM786 480h1v12h-1zM787 480h1v12h-1zM788 480h1v12h-1zM788 492h1v2h-1zM789 480h1v12h-1zM790 480h1v12h-1zM791 480h1v12h-1zM792 480h1v12h-1zM792 492h1v2h-1zM793 480h1v12h-1zM793 492h1v2h-1zM794 480h1v12h-1zM795 480h1v12h-1zM795 492h1v2h-1zM796 480h1v12h-1zM797 480h1v12h-1zM798 480h1v12h-1zM798 492h1v2h-1zM799 480h1v12h-1zM799 492h1v2h-1zM800 480h1v12h-1zM801 480h1v12h-1zM801 492h1v2h-1zM802 480h1v12h-1zM803 480h1v12h-1zM804 480h1v12h-1zM805 480h1v12h-1zM805 492h1v2h-1zM806 480h1v12h-1zM807 480h1v12h-1zM807 492h1v2h-1zM808 480h1v12h-1zM808 492h1v2h-1zM809 480h1v12h-1zM810 480h1v12h-1zM811 480h1v12h-1zM812 480h1v12h-1zM812 492h1v2h-1zM813 480h1v12h-1zM814 480h1v12h-1zM814 492h1v2h-1zM815 480h1v12h-1zM816 480h1v12h-1zM817 480h1v12h-1zM818 480h1v12h-1zM818 492h1v2h-1zM819 480h1v12h-1zM819 492h1v2h-1zM820 480h1v12h-1zM821 480h1v12h-1zM821 492h1v2h-1zM822 480h1v12h-1zM823 480h1v12h-1zM824 480h1v12h-1zM825 480h1v12h-1zM826 480h1v12h-1zM826 492h1v2h-1zM827 480h1v12h-1zM827 492h1v2h-1zM828 480h1v12h-1zM829 480h1v12h-1zM829 492h1v2h-1zM830 480h1v12h-1zM831 480h1v12h-1zM832 480h1v12h-1zM832 492h1v2h-1zM833 480h1v12h-1zM834 480h1v12h-1zM835 480h1v12h-1zM836 480h1v12h-1zM837 480h1v12h-1zM837 492h1v2h-1zM838 480h1v12h-1zM839 480h1v12h-1zM839 492h1v2h-1zM840 480h1v12h-1zM841 480h1v12h-1zM841 492h1v2h-1zM841 477h1v3h-1zM842 480h1v12h-1zM843 480h1v12h-1zM844 480h1v12h-1zM844 477h1v3h-1zM845 480h1v12h-1zM846 480h1v12h-1zM847 480h1v12h-1zM848 480h1v12h-1zM849 480h1v12h-1zM849 492h1v2h-1zM850 480h1v12h-1zM850 492h1v2h-1zM851 480h1v12h-1zM851 477h1v3h-1zM852 480h1v12h-1zM853 480h1v12h-1zM853 492h1v2h-1zM854 480h1v12h-1zM855 480h1v12h-1zM856 480h1v12h-1zM857 480h1v12h-1zM857 492h1v2h-1zM858 480h1v12h-1zM859 480h1v12h-1zM860 480h1v12h-1zM860 492h1v2h-1zM861 480h1v12h-1zM862 480h1v12h-1zM862 492h1v2h-1zM863 480h1v12h-1zM863 492h1v2h-1zM864 480h1v12h-1zM865 480h1v12h-1zM865 492h1v2h-1zM866 480h1v12h-1zM867 480h1v12h-1zM867 492h1v2h-1zM868 480h1v12h-1zM869 480h1v12h-1zM870 480h1v12h-1zM870 492h1v2h-1zM871 480h1v12h-1zM872 480h1v12h-1zM873 480h1v12h-1zM873 492h1v2h-1zM874 480h1v12h-1zM874 492h1v2h-1zM875 480h1v12h-1zM876 480h1v12h-1zM877 480h1v12h-1zM878 480h1v12h-1zM879 480h1v12h-1zM880 480h1v12h-1zM880 492h1v2h-1zM881 480h1v12h-1zM882 480h1v12h-1zM883 480h1v12h-1zM884 480h1v12h-1zM885 480h1v12h-1zM886 480h1v12h-1zM887 480h1v12h-1zM887 492h1v2h-1zM888 480h1v12h-1zM889 480h1v12h-1zM890 480h1v12h-1zM890 492h1v2h-1zM891 480h1v12h-1zM892 480h1v12h-1zM893 480h1v12h-1zM894 480h1v12h-1zM894 492h1v2h-1zM895 480h1v12h-1zM896 480h1v12h-1zM896 492h1v2h-1zM148 636h123v12h-123zM152 648h1v2h-1zM153 648h1v3h-1zM157 648h1v3h-1zM160 648h1v2h-1zM161 648h1v2h-1zM180 648h1v3h-1zM186 648h1v3h-1zM204 648h1v2h-1zM209 648h1v2h-1zM210 648h1v2h-1zM214 648h1v2h-1zM219 648h1v2h-1zM227 648h1v3h-1zM245 648h1v2h-1zM250 648h1v2h-1zM255 648h1v2h-1zM264 633h1v3h-1zM265 648h1v2h-1zM269 648h1v2h-1zM398 636h123v12h-123zM401 648h1v3h-1zM404 648h1v2h-1zM405 648h1v2h-1zM411 648h1v2h-1zM412 648h1v2h-1zM423 648h1v3h-1zM430 648h1v3h-1zM434 648h1v2h-1zM440 648h1v2h-1zM445 648h1v2h-1zM446 648h1v2h-1zM448 633h1v3h-1zM450 648h1v2h-1zM451 648h1v2h-1zM456 648h1v2h-1zM464 648h1v3h-1zM475 648h1v2h-1zM476 648h1v3h-1zM490 648h1v3h-1zM495 648h1v2h-1zM496 648h1v2h-1zM500 648h1v3h-1zM508 648h1v3h-1zM509 648h1v2h-1zM516 648h1v3h-1zM648 636h123v12h-123zM653 648h1v2h-1zM654 648h1v2h-1zM656 648h1v2h-1zM657 648h1v2h-1zM666 633h1v3h-1zM673 648h1v2h-1zM688 648h1v2h-1zM692 633h1v3h-1zM697 648h1v2h-1zM700 648h1v3h-1zM701 648h1v3h-1zM703 648h1v2h-1zM704 648h1v3h-1zM706 648h1v3h-1zM707 648h1v2h-1zM711 648h1v3h-1zM727 648h1v3h-1zM735 648h1v3h-1zM736 648h1v2h-1zM739 648h1v2h-1zM740 648h1v2h-1zM747 648h1v3h-1zM750 648h1v2h-1zM751 648h1v2h-1zM755 648h1v2h-1zM756 648h1v2h-1zM761 648h1v3h-1zM762 648h1v3h-1zM898 636h123v12h-123zM902 648h1v3h-1zM906 648h1v2h-1zM907 648h1v3h-1zM915 648h1v2h-1zM916 648h1v2h-1zM929 648h1v2h-1zM935 648h1v2h-1zM936 648h1v3h-1zM947 648h1v3h-1zM959 648h1v2h-1zM960 648h1v2h-1zM975 648h1v2h-1zM976 648h1v2h-1zM980 648h1v3h-1zM982 648h1v3h-1zM991 648h1v3h-1zM995 648h1v2h-1zM1000 648h1v3h-1zM1004 648h1v3h-1zM1005 648h1v3h-1zM1020 648h1v2h-1zM146 486h1v155h-1zM147 628h1v23h-1zM148 632h2v19h-2zM396 486h1v155h-1zM397 628h1v23h-1zM398 632h2v19h-2zM646 486h1v155h-1zM647 628h1v23h-1zM648 632h2v19h-2zM896 486h1v155h-1zM897 628h1v23h-1zM898 632h2v19h-2zM270 474h1v175h-1zM269 600h1v49h-1zM272 472h1v2h-1zM520 474h1v175h-1zM519 600h1v49h-1zM522 472h1v2h-1zM770 474h1v175h-1zM769 600h1v49h-1zM772 472h1v2h-1zM1020 474h1v175h-1zM1019 600h1v49h-1zM1022 472h1v2h-1z"/>
<path fill="#000" d=""/>
<path fill="#fff" d="M21 30h1v1h-1zM21 43h1v1h-1zM21 56h1v1h-1zM21 69h1v1h-1zM21 95h1v1h-1zM21 108h1v1h-1zM21 121h1v1h-1zM21 134h1v1h-1zM21 160h1v1h-1zM21 173h1v1h-1zM21 186h1v1h-1zM21 199h1v1h-1zM21 225h1v1h-1zM21 238h1v1h-1zM21 251h1v1h-1zM21 264h1v1h-1zM21 290h1v1h-1zM21 303h1v1h-1zM21 316h1v1h-1zM21 329h1v1h-1zM21 342h1v1h-1zM21 355h1v1h-1zM21 368h1v1h-1zM21 381h1v1h-1zM21 394h1v1h-1zM21 420h1v1h-1zM21 433h1v1h-1zM21 446h1v1h-1zM21 459h1v1h-1zM21 485h1v1h-1zM21 498h1v1h-1zM21 511h1v1h-1zM21 524h1v1h-1zM21 550h1v1h-1zM21 563h1v1h-1zM21 576h1v1h-1zM21 589h1v1h-1zM21 615h1v1h-1zM21 628h1v1h-1zM21 641h1v1h-1zM21 654h1v1h-1zM22 82h1v1h-1zM22 147h1v1h-1zM22 212h1v1h-1zM22 277h1v1h-1zM22 407h1v1h-1zM22 472h1v1h-1zM22 537h1v1h-1zM22 602h1v1h-1zM23 30h1v1h-1zM23 43h1v1h-1zM23 56h1v1h-1zM23 69h1v1h-1zM23 95h1v1h-1zM23 108h1v1h-1zM23 121h1v1h-1zM23 134h1v1h-1zM23 160h1v1h-1zM23 173h1v1h-1zM23 186h1v1h-1zM23 199h1v1h-1zM23 225h1v1h-1zM23 238h1v1h-1zM23 251h1v1h-1zM23 264h1v1h-1zM23 290h1v1h-1zM23 303h1v1h-1zM23 316h1v1h-1zM23 329h1v1h-1zM23 342h1v1h-1zM23 355h1v1h-1zM23 368h1v1h-1zM23 381h1v1h-1zM23 394h1v1h-1zM23 420h1v1h-1zM23 433h1v1h-1zM23 446h1v1h-1zM23 459h1v1h-1zM23 485h1v1h-1zM23 498h1v1h-1zM23 511h1v1h-1zM23 524h1v1h-1zM23 550h1v1h-1zM23 563h1v1h-1zM23 576h1v1h-1zM23 589h1v1h-1zM23 615h1v1h-1zM23 628h1v1h-1zM23 641h1v1h-1zM23 654h1v1h-1zM24 82h1v1h-1zM24 147h1v1h-1zM24 212h1v1h-1zM24 277h1v1h-1zM24 407h1v1h-1zM24 472h1v1h-1zM24 537h1v1h-1zM24 602h1v1h-1zM25 342h1v1h-1zM26 82h1v1h-1zM26 147h1v1h-1zM26 212h1v1h-1zM26 277h1v1h-1zM26 407h1v1h-1zM26 472h1v1h-1zM26 537h1v1h-1zM26 602h1v1h-1zM27 342h1v1h-1zM29 342h1v1h-1zM31 342h1v1h-1zM33 342h1v1h-1zM35 342h1v1h-1zM37 342h1v1h-1zM39 342h1v1h-1zM41 17h1v1h-1zM41 19h1v1h-1zM41 82h1v1h-1zM41 147h1v1h-1zM41 212h1v1h-1zM41 277h1v1h-1zM41 339h1v1h-1zM41 341h1v1h-1zM41 342h1v1h-1zM41 343h1v1h-1zM41 345h1v1h-1zM41 407h1v1h-1zM41 472h1v1h-1zM41 537h1v1h-1zM41 602h1v1h-1zM41 665h1v1h-1zM41 667h1v1h-1zM43 342h1v1h-1zM45 342h1v1h-1zM47 342h1v1h-1zM49 342h1v1h-1zM51 342h1v1h-1zM53 342h1v1h-1zM55 342h1v1h-1zM57 342h1v1h-1zM59 342h1v1h-1zM61 17h1v1h-1zM61 19h1v1h-1zM61 82h1v1h-1zM61 147h1v1h-1zM61 212h1v1h-1zM61 277h1v1h-1zM61 339h1v1h-1zM61 341h1v1h-1zM61 342h1v1h-1zM61 343h1v1h-1zM61 345h1v1h-1zM61 407h1v1h-1zM61 472h1v1h-1zM61 537h1v1h-1zM61 602h1v1h-1zM61 665h1v1h-1zM61 667h1v1h-1zM63 342h1v1h-1zM65 342h1v1h-1zM67 342h1v1h-1zM69 342h1v1h-1zM71 342h1v1h-1zM73 342h1v1h-1zM75 342h1v1h-1zM77 342h1v1h-1zM79 342h1v1h-1zM81 17h1v1h-1zM81 19h1v1h-1zM81 82h1v1h-1zM81 147h1v1h-1zM81 212h1v1h-1zM81 277h1v1h-1zM81 339h1v1h-1zM81 341h1v1h-1zM81 342h1v1h-1zM81 343h1v1h-1zM81 345h1v1h-1zM81 407h1v1h-1zM81 472h1v1h-1zM81 537h1v1h-1zM81 602h1v1h-1zM81 665h1v1h-1zM81 667h1v1h-1zM83 342h1v1h-1zM85 342h1v1h-1zM87 342h1v1h-1zM89 342h1v1h-1zM91 342h1v1h-1zM93 342h1v1h-1zM95 342h1v1h-1zM97 342h1v1h-1zM99 342h1v1h-1zM101 17h1v1h-1zM101 19h1v1h-1zM101 82h1v1h-1zM101 147h1v1h-1zM101 212h1v1h-1zM101 277h1v1h-1zM101 339h1v1h-1zM101 341h1v1h-1zM101 342h1v1h-1zM101 343h1v1h-1zM101 345h1v1h-1zM101 407h1v1h-1zM101 472h1v1h-1zM101 537h1v1h-1zM101 602h1v1h-1zM101 665h1v1h-1zM101 667h1v1h-1zM103 342h1v1h-1zM105 342h1v1h-1zM107 342h1v1h-1zM109 342h1v1h-1zM111 342h1v1h-1zM113 342h1v1h-1zM115 342h1v1h-1zM117 342h1v1h-1zM119 342h1v1h-1zM121 18h1v1h-1zM121 20h1v1h-1zM121 22h1v1h-1zM121 30h1v1h-1zM121 43h1v1h-1zM121 56h1v1h-1zM121 69h1v1h-1zM121 82h1v1h-1zM121 95h1v1h-1zM121 108h1v1h-1zM121 121h1v1h-1zM121 134h1v1h-1zM121 147h1v1h-1zM121 160h1v1h-1zM121 173h1v1h-1zM121 186h1v1h-1zM121 199h1v1h-1zM121 212h1v1h-1zM121 225h1v1h-1zM121 238h1v1h-1zM121 251h1v1h-1zM121 264h1v1h-1zM121 277h1v1h-1zM121 290h1v1h-1zM121 303h1v1h-1zM121 316h1v1h-1zM121 329h1v1h-1zM121 336h1v1h-1zM121 338h1v1h-1zM121 340h1v1h-1zM121 342h1v1h-1zM121 344h1v1h-1zM121 346h1v1h-1zM121 348h1v1h-1zM121 355h1v1h-1zM121 368h1v1h-1zM121 381h1v1h-1zM121 394h1v1h-1zM121 407h1v1h-1zM121 420h1v1h-1zM121 433h1v1h-1zM121 446h1v1h-1zM121 459h1v1h-1zM121 472h1v1h-1zM121 485h1v1h-1zM121 498h1v1h-1zM121 511h1v1h-1zM121 524h1v1h-1zM121 537h1v1h-1zM121 550h1v1h-1zM121 563h1v1h-1zM121 576h1v1h-1zM121 589h1v1h-1zM121 602h1v1h-1zM121 615h1v1h-1zM121 628h1v1h-1zM121 641h1v1h-1zM121 654h1v1h-1zM121 662h1v1h-1zM121 664h1v1h-1zM121 666h1v1h-1zM123 342h1v1h-1zM125 342h1v1h-1zM127 342h1v1h-1zM129 342h1v1h-1zM131 342h1v1h-1zM133 342h1v1h-1zM135 342h1v1h-1zM137 342h1v1h-1zM139 342h1v1h-1zM141 17h1v1h-1zM141 19h1v1h-1zM141 82h1v1h-1zM141 147h1v1h-1zM141 212h1v1h-1zM141 277h1v1h-1zM141 339h1v1h-1zM141 341h1v1h-1zM141 342h1v1h-1zM141 343h1v1h-1zM141 345h1v1h-1zM141 407h1v1h-1zM141 472h1v1h-1zM141 537h1v1h-1zM141 602h1v1h-1zM141 665h1v1h-1zM141 667h1v1h-1zM143 342h1v1h-1zM145 342h1v1h-1zM147 342h1v1h-1zM149 342h1v1h-1zM151 342h1v1h-1zM153 342h1v1h-1zM155 342h1v1h-1zM157 342h1v1h-1zM159 342h1v1h-1zM161 17h1v1h-1zM161 19h1v1h-1zM161 82h1v1h-1zM161 147h1v1h-1zM161 212h1v1h-1zM161 277h1v1h-1zM161 339h1v1h-1zM161 341h1v1h-1zM161 342h1v1h-1zM161 343h1v1h-1zM161 345h1v1h-1zM161 407h1v1h-1zM161 472h1v1h-1zM161 537h1v1h-1zM161 602h1v1h-1zM161 665h1v1h-1zM161 667h1v1h-1zM163 342h1v1h-1zM165 342h1v1h-1zM167 342h1v1h-1zM169 342h1v1h-1zM171 342h1v1h-1zM173 342h1v1h-1zM175 342h1v1h-1zM177 342h1v1h-1zM179 342h1v1h-1zM181 17h1v1h-1zM181 19h1v1h-1zM181 82h1v1h-1zM181 147h1v1h-1zM181 212h1v1h-1zM181 277h1v1h-1zM181 339h1v1h-1zM181 341h1v1h-1zM181 342h1v1h-1zM181 343h1v1h-1zM181 345h1v1h-1zM181 407h1v1h-1zM181 472h1v1h-1zM181 537h1v1h-1zM181 602h1v1h-1zM181 665h1v1h-1zM181 667h1v1h-1zM183 342h1v1h-1zM185 342h1v1h-1zM187 342h1v1h-1zM189 342h1v1h-1zM191 342h1v1h-1zM193 342h1v1h-1zM195 342h1v1h-1zM197 342h1v1h-1zM199 342h1v1h-1zM201 17h1v1h-1zM201 19h1v1h-1zM201 82h1v1h-1zM201 147h1v1h-1zM201 212h1v1h-1zM201 277h1v1h-1zM201 339h1v1h-1zM201 341h1v1h-1zM201 342h1v1h-1zM201 343h1v1h-1zM201 345h1v1h-1zM201 407h1v1h-1zM201 472h1v1h-1zM201 537h1v1h-1zM201 602h1v1h-1zM201 665h1v1h-1zM201 667h1v1h-1zM203 342h1v1h-1zM205 342h1v1h-1zM207 342h1v1h-1zM209 342h1v1h-1zM211 342h1v1h-1zM213 342h1v1h-1zM215 342h1v1h-1zM217 342h1v1h-1zM219 342h1v1h-1zM221 18h1v1h-1zM221 20h1v1h-1zM221 22h1v1h-1zM221 30h1v1h-1zM221 43h1v1h-1zM221 56h1v1h-1zM221 69h1v1h-1zM221 82h1v1h-1zM221 95h1v1h-1zM221 108h1v1h-1zM221 121h1v1h-1zM221 134h1v1h-1zM221 147h1v1h-1zM221 160h1v1h-1zM221 173h1v1h-1zM221 186h1v1h-1zM221 199h1v1h-1zM221 212h1v1h-1zM221 225h1v1h-1zM221 238h1v1h-1zM221 251h1v1h-1zM221 264h1v1h-1zM221 277h1v1h-1zM221 290h1v1h-1zM221 303h1v1h-1zM221 316h1v1h-1zM221 329h1v1h-1zM221 336h1v1h-1zM221 338h1v1h-1zM221 340h1v1h-1zM221 342h1v1h-1zM221 344h1v1h-1zM221 346h1v1h-1zM221 348h1v1h-1zM221 355h1v1h-1zM221 368h1v1h-1zM221 381h1v1h-1zM221 394h1v1h-1zM221 407h1v1h-1zM221 420h1v1h-1zM221 433h1v1h-1zM221 446h1v1h-1zM221 459h1v1h-1zM221 472h1v1h-1zM221 485h1v1h-1zM221 498h1v1h-1zM221 511h1v1h-1zM221 524h1v1h-1zM221 537h1v1h-1zM221 550h1v1h-1zM221 563h1v1h-1zM221 576h1v1h-1zM221 589h1v1h-1zM221 602h1v1h-1zM221 615h1v1h-1zM221 628h1v1h-1zM221 641h1v1h-1zM221 654h1v1h-1zM221 662h1v1h-1zM221 664h1v1h-1zM221 666h1v1h-1zM223 342h1v1h-1zM225 342h1v1h-1zM227 342h1v1h-1zM229 342h1v1h-1zM231 342h1v1h-1zM233 342h1v1h-1zM235 342h1v1h-1zM237 342h1v1h-1zM239 342h1v1h-1zM241 17h1v1h-1zM241 19h1v1h-1zM241 82h1v1h-1zM241 147h1v1h-1zM241 212h1v1h-1zM241 277h1v1h-1zM241 339h1v1h-1zM241 341h1v1h-1zM241 342h1v1h-1zM241 343h1v1h-1zM241 345h1v1h-1zM241 407h1v1h-1zM241 472h1v1h-1zM241 537h1v1h-1zM241 602h1v1h-1zM241 665h1v1h-1zM241 667h1v1h-1zM243 342h1v1h-1zM245 342h1v1h-1zM247 342h1v1h-1zM249 342h1v1h-1zM251 342h1v1h-1zM253 342h1v1h-1zM255 342h1v1h-1zM257 342h1v1h-1zM259 342h1v1h-1zM261 17h1v1h-1zM261 19h1v1h-1zM261 82h1v1h-1zM261 147h1v1h-1zM261 212h1v1h-1zM261 277h1v1h-1zM261 339h1v1h-1zM261 341h1v1h-1zM261 342h1v1h-1zM261 343h1v1h-1zM261 345h1v1h-1zM261 407h1v1h-1zM261 472h1v1h-1zM261 537h1v1h-1zM261 602h1v1h-1zM261 665h1v1h-1zM261 667h1v1h-1zM263 342h1v1h-1zM265 342h1v1h-1zM267 342h1v1h-1zM269 342h1v1h-1zM271 342h1v1h-1zM273 342h1v1h-1zM275 342h1v1h-1zM277 342h1v1h-1zM279 342h1v1h-1zM281 17h1v1h-1zM281 19h1v1h-1zM281 82h1v1h-1zM281 147h1v1h-1zM281 212h1v1h-1zM281 277h1v1h-1zM281 339h1v1h-1zM281 341h1v1h-1zM281 342h1v1h-1zM281 343h1v1h-1zM281 345h1v1h-1zM281 407h1v1h-1zM281 472h1v1h-1zM281 537h1v1h-1zM281 602h1v1h-1zM281 665h1v1h-1zM281 667h1v1h-1zM283 342h1v1h-1zM285 342h1v1h-1zM287 342h1v1h-1zM289 342h1v1h-1zM291 342h1v1h-1zM293 342h1v1h-1zM295 342h1v1h-1zM297 342h1v1h-1zM299 342h1v1h-1zM301 17h1v1h-1zM301 19h1v1h-1zM301 82h1v1h-1zM301 147h1v1h-1zM301 212h1v1h-1zM301 277h1v1h-1zM301 339h1v1h-1zM301 341h1v1h-1zM301 342h1v1h-1zM301 343h1v1h-1zM301 345h1v1h-1zM301 407h1v1h-1zM301 472h1v1h-1zM301 537h1v1h-1zM301 602h1v1h-1zM301 665h1v1h-1zM301 667h1v1h-1zM303 342h1v1h-1zM305 342h1v1h-1zM307 342h1v1h-1zM309 342h1v1h-1zM311 342h1v1h-1zM313 342h1v1h-1zM315 342h1v1h-1zM317 342h1v1h-1zM319 342h1v1h-1zM321 18h1v1h-1zM321 20h1v1h-1zM321 22h1v1h-1zM321 30h1v1h-1zM321 43h1v1h-1zM321 56h1v1h-1zM321 69h1v1h-1zM321 82h1v1h-1zM321 95h1v1h-1zM321 108h1v1h-1zM321 121h1v1h-1zM321 134h1v1h-1zM321 147h1v1h-1zM321 160h1v1h-1zM321 173h1v1h-1zM321 186h1v1h-1zM321 199h1v1h-1zM321 212h1v1h-1zM321 225h1v1h-1zM321 238h1v1h-1zM321 251h1v1h-1zM321 264h1v1h-1zM321 277h1v1h-1zM321 290h1v1h-1zM321 303h1v1h-1zM321 316h1v1h-1zM321 329h1v1h-1zM321 336h1v1h-1zM321 338h1v1h-1zM321 340h1v1h-1zM321 342h1v1h-1zM321 344h1v1h-1zM321 346h1v1h-1zM321 348h1v1h-1zM321 355h1v1h-1zM321 368h1v1h-1zM321 381h1v1h-1zM321 394h1v1h-1zM321 407h1v1h-1zM321 420h1v1h-1zM321 433h1v1h-1zM321 446h1v1h-1zM321 459h1v1h-1zM321 472h1v1h-1zM321 485h1v1h-1zM321 498h1v1h-1zM321 511h1v1h-1zM321 524h1v1h-1zM321 537h1v1h-1zM321 550h1v1h-1zM321 563h1v1h-1zM321 576h1v1h-1zM321 589h1v1h-1zM321 602h1v1h-1zM321 615h1v1h-1zM321 628h1v1h-1zM321 641h1v1h-1zM321 654h1v1h-1zM321 662h1v1h-1zM321 664h1v1h-1zM321 666h1v1h-1zM323 342h1v1h-1zM325 342h1v1h-1zM327 342h1v1h-1zM329 342h1v1h-1zM331 342h1v1h-1zM333 342h1v1h-1zM335 342h1v1h-1zM337 342h1v1h-1zM339 342h1v1h-1zM341 17h1v1h-1zM341 19h1v1h-1zM341 82h1v1h-1zM341 147h1v1h-1zM341 212h1v1h-1zM341 277h1v1h-1zM341 339h1v1h-1zM341 341h1v1h-1zM341 342h1v1h-1zM341 343h1v1h-1zM341 345h1v1h-1zM341 407h1v1h-1zM341 472h1v1h-1zM341 537h1v1h-1zM341 602h1v1h-1zM341 665h1v1h-1zM341 667h1v1h-1zM343 342h1v1h-1zM345 342h1v1h-1zM347 342h1v1h-1zM349 342h1v1h-1zM351 342h1v1h-1zM353 342h1v1h-1zM355 342h1v1h-1zM357 342h1v1h-1zM359 342h1v1h-1zM361 17h1v1h-1zM361 19h1v1h-1zM361 82h1v1h-1zM361 147h1v1h-1zM361 212h1v1h-1zM361 277h1v1h-1zM361 339h1v1h-1zM361 341h1v1h-1zM361 342h1v1h-1zM361 343h1v1h-1zM361 345h1v1h-1zM361 407h1v1h-1zM361 472h1v1h-1zM361 537h1v1h-1zM361 602h1v1h-1zM361 665h1v1h-1zM361 667h1v1h-1zM363 342h1v1h-1zM365 342h1v1h-1zM367 342h1v1h-1zM369 342h1v1h-1zM371 342h1v1h-1zM373 342h1v1h-1zM375 342h1v1h-1zM377 342h1v1h-1zM379 342h1v1h-1zM381 17h1v1h-1zM381 19h1v1h-1zM381 82h1v1h-1zM381 147h1v1h-1zM381 212h1v1h-1zM381 277h1v1h-1zM381 339h1v1h-1zM381 341h1v1h-1zM381 342h1v1h-1zM381 343h1v1h-1zM381 345h1v1h-1zM381 407h1v1h-1zM381 472h1v1h-1zM381 537h1v1h-1zM381 602h1v1h-1zM381 665h1v1h-1zM381 667h1v1h-1zM383 342h1v1h-1zM385 342h1v1h-1zM387 342h1v1h-1zM389 342h1v1h-1zM391 342h1v1h-1zM393 342h1v1h-1zM395 342h1v1h-1zM397 342h1v1h-1zM399 342h1v1h-1zM401 17h1v1h-1zM401 19h1v1h-1zM401 82h1v1h-1zM401 147h1v1h-1zM401 212h1v1h-1zM401 277h1v1h-1zM401 339h1v1h-1zM401 341h1v1h-1zM401 342h1v1h-1zM401 343h1v1h-1zM401 345h1v1h-1zM401 407h1v1h-1zM401 472h1v1h-1zM401 537h1v1h-1zM401 602h1v1h-1zM401 665h1v1h-1zM401 667h1v1h-1zM403 342h1v1h-1zM405 342h1v1h-1zM407 342h1v1h-1zM409 342h1v1h-1zM411 342h1v1h-1zM413 342h1v1h-1zM415 342h1v1h-1zM417 342h1v1h-1zM419 342h1v1h-1zM421 18h1v1h-1zM421 20h1v1h-1zM421 22h1v1h-1zM421 30h1v1h-1zM421 43h1v1h-1zM421 56h1v1h-1zM421 69h1v1h-1zM421 82h1v1h-1zM421 95h1v1h-1zM421 108h1v1h-1zM421 121h1v1h-1zM421 134h1v1h-1zM421 147h1v1h-1zM421 160h1v1h-1zM421 173h1v1h-1zM421 186h1v1h-1zM421 199h1v1h-1zM421 212h1v1h-1zM421 225h1v1h-1zM421 238h1v1h-1zM421 251h1v1h-1zM421 264h1v1h-1zM421 277h1v1h-1zM421 290h1v1h-1zM421 303h1v1h-1zM421 316h1v1h-1zM421 329h1v1h-1zM421 336h1v1h-1zM421 338h1v1h-1zM421 340h1v1h-1zM421 342h1v1h-1zM421 344h1v1h-1zM421 346h1v1h-1zM421 348h1v1h-1zM421 355h1v1h-1zM421 368h1v1h-1zM421 381h1v1h-1zM421 394h1v1h-1zM421 407h1v1h-1zM421 420h1v1h-1zM421 433h1v1h-1zM421 446h1v1h-1zM421 459h1v1h-1zM421 472h1v1h-1zM421 485h1v1h-1zM421 498h1v1h-1zM421 511h1v1h-1zM421 524h1v1h-1zM421 537h1v1h-1zM421 550h1v1h-1zM421 563h1v1h-1zM421 576h1v1h-1zM421 589h1v1h-1zM421 602h1v1h-1zM421 615h1v1h-1zM421 628h1v1h-1zM421 641h1v1h-1zM421 654h1v1h-1zM421 662h1v1h-1zM421 664h1v1h-1zM421 666h1v1h-1zM423 342h1v1h-1zM425 342h1v1h-1zM427 342h1v1h-1zM429 342h1v1h-1zM431 342h1v1h-1zM433 342h1v1h-1zM435 342h1v1h-1zM437 342h1v1h-1zM439 342h1v1h-1zM441 17h1v1h-1zM441 19h1v1h-1zM441 82h1v1h-1zM441 147h1v1h-1zM441 212h1v1h-1zM441 277h1v1h-1zM441 339h1v1h-1zM441 341h1v1h-1zM441 342h1v1h-1zM441 343h1v1h-1zM441 345h1v1h-1zM441 407h1v1h-1zM441 472h1v1h-1zM441 537h1v1h-1zM441 602h1v1h-1zM441 665h1v1h-1zM441 667h1v1h-1zM443 342h1v1h-1zM445 342h1v1h-1zM447 342h1v1h-1zM449 342h1v1h-1zM451 342h1v1h-1zM453 342h1v1h-1zM455 342h1v1h-1zM457 342h1v1h-1zM459 342h1v1h-1zM461 17h1v1h-1zM461 19h1v1h-1zM461 82h1v1h-1zM461 147h1v1h-1zM461 212h1v1h-1zM461 277h1v1h-1zM461 339h1v1h-1zM461 341h1v1h-1zM461 342h1v1h-1zM461 343h1v1h-1zM461 345h1v1h-1zM461 407h1v1h-1zM461 472h1v1h-1zM461 537h1v1h-1zM461 602h1v1h-1zM461 665h1v1h-1zM461 667h1v1h-1zM463 342h1v1h-1zM465 342h1v1h-1zM467 342h1v1h-1zM469 342h1v1h-1zM471 342h1v1h-1zM473 342h1v1h-1zM475 342h1v1h-1zM477 342h1v1h-1zM479 342h1v1h-1zM481 17h1v1h-1zM481 19h1v1h-1zM481 82h1v1h-1zM481 147h1v1h-1zM481 212h1v1h-1zM481 277h1v1h-1zM481 339h1v1h-1zM481 341h1v1h-1zM481 342h1v1h-1zM481 343h1v1h-1zM481 345h1v1h-1zM481 407h1v1h-1zM481 472h1v1h-1zM481 537h1v1h-1zM481 602h1v1h-1zM481 665h1v1h-1zM481 667h1v1h-1zM483 342h1v1h-1zM485 342h1v1h-1zM487 342h1v1h-1zM489 342h1v1h-1zM491 342h1v1h-1zM493 342h1v1h-1zM495 342h1v1h-1zM497 342h1v1h-1zM499 342h1v1h-1zM501 17h1v1h-1zM501 19h1v1h-1zM501 82h1v1h-1zM501 147h1v1h-1zM501 212h1v1h-1zM501 277h1v1h-1zM501 339h1v1h-1zM501 341h1v1h-1zM501 342h1v1h-1zM501 343h1v1h-1zM501 345h1v1h-1zM501 407h1v1h-1zM501 472h1v1h-1zM501 537h1v1h-1zM501 602h1v1h-1zM501 665h1v1h-1zM501 667h1v1h-1zM503 342h1v1h-1zM505 342h1v1h-1zM507 342h1v1h-1zM509 342h1v1h-1zM511 342h1v1h-1zM513 342h1v1h-1zM515 82h1v1h-1zM515 147h1v1h-1zM515 212h1v1h-1zM515 277h1v1h-1zM515 342h1v1h-1zM515 407h1v1h-1zM515 472h1v1h-1zM515 537h1v1h-1zM515 602h1v1h-1zM517 82h1v1h-1zM517 147h1v1h-1zM517 212h1v1h-1zM517 277h1v1h-1zM517 342h1v1h-1zM517 407h1v1h-1zM517 472h1v1h-1zM517 537h1v1h-1zM517 602h1v1h-1zM518 30h1v1h-1zM518 43h1v1h-1zM518 56h1v1h-1zM518 69h1v1h-1zM518 95h1v1h-1zM518 108h1v1h-1zM518 121h1v1h-1zM518 134h1v1h-1zM518 160h1v1h-1zM518 173h1v1h-1zM518 186h1v1h-1zM518 199h1v1h-1zM518 225h1v1h-1zM518 238h1v1h-1zM518 251h1v1h-1zM518 264h1v1h-1zM518 290h1v1h-1zM518 303h1v1h-1zM518 316h1v1h-1zM518 329h1v1h-1zM518 355h1v1h-1zM518 368h1v1h-1zM518 381h1v1h-1zM518 394h1v1h-1zM518 420h1v1h-1zM518 433h1v1h-1zM518 446h1v1h-1zM518 459h1v1h-1zM518 485h1v1h-1zM518 498h1v1h-1zM518 511h1v1h-1zM518 524h1v1h-1zM518 550h1v1h-1zM518 563h1v1h-1zM518 576h1v1h-1zM518 589h1v1h-1zM518 615h1v1h-1zM518 628h1v1h-1zM518 641h1v1h-1zM518 654h1v1h-1zM519 82h1v1h-1zM519 147h1v1h-1zM519 212h1v1h-1zM519 277h1v1h-1zM519 342h1v1h-1zM519 407h1v1h-1zM519 472h1v1h-1zM519 537h1v1h-1zM519 602h1v1h-1zM520 30h1v1h-1zM520 43h1v1h-1zM520 56h1v1h-1zM520 69h1v1h-1zM520 95h1v1h-1zM520 108h1v1h-1zM520 121h1v1h-1zM520 134h1v1h-1zM520 160h1v1h-1zM520 173h1v1h-1zM520 186h1v1h-1zM520 199h1v1h-1zM520 225h1v1h-1zM520 238h1v1h-1zM520 251h1v1h-1zM520 264h1v1h-1zM520 290h1v1h-1zM520 303h1v1h-1zM520 316h1v1h-1zM520 329h1v1h-1zM520 355h1v1h-1zM520 368h1v1h-1zM520 381h1v1h-1zM520 394h1v1h-1zM520 420h1v1h-1zM520 433h1v1h-1zM520 446h1v1h-1zM520 459h1v1h-1zM520 485h1v1h-1zM520 498h1v1h-1zM520 511h1v1h-1zM520 524h1v1h-1zM520 550h1v1h-1zM520 563h1v1h-1zM520 576h1v1h-1zM520 589h1v1h-1zM520 615h1v1h-1zM520 628h1v1h-1zM520 641h1v1h-1zM520 654h1v1h-1zM521 18h1v1h-1zM521 20h1v1h-1zM521 22h1v1h-1zM521 24h1v1h-1zM521 26h1v1h-1zM521 28h1v1h-1zM521 29h1v1h-1zM521 30h1v1h-1zM521 31h1v1h-1zM521 32h1v1h-1zM521 34h1v1h-1zM521 36h1v1h-1zM521 38h1v1h-1zM521 40h1v1h-1zM521 42h1v1h-1zM521 43h1v1h-1zM521 44h1v1h-1zM521 46h1v1h-1zM521 48h1v1h-1zM521 50h1v1h-1zM521 52h1v1h-1zM521 54h1v1h-1zM521 55h1v1h-1zM521 56h1v1h-1zM521 57h1v1h-1zM521 58h1v1h-1zM521 60h1v1h-1zM521 62h1v1h-1zM521 64h1v1h-1zM521 66h1v1h-1zM521 68h1v1h-1zM521 69h1v1h-1zM521 70h1v1h-1zM521 72h1v1h-1zM521 74h1v1h-1zM521 76h1v1h-1zM521 78h1v1h-1zM521 80h1v1h-1zM521 82h1v1h-1zM521 84h1v1h-1zM521 86h1v1h-1zM521 88h1v1h-1zM521 90h1v1h-1zM521 92h1v1h-1zM521 94h1v1h-1zM521 95h1v1h-1zM521 96h1v1h-1zM521 98h1v1h-1zM521 100h1v1h-1zM521 102h1v1h-1zM521 104h1v1h-1zM521 106h1v1h-1zM521 107h1v1h-1zM521 108h1v1h-1zM521 109h1v1h-1zM521 110h1v1h-1zM521 112h1v1h-1zM521 114h1v1h-1zM521 116h1v1h-1zM521 118h1v1h-1zM521 120h1v1h-1zM521 121h1v1h-1zM521 122h1v1h-1zM521 124h1v1h-1zM521 126h1v1h-1zM521 128h1v1h-1zM521 130h1v1h-1zM521 132h1v1h-1zM521 133h1v1h-1zM521 134h1v1h-1zM521 135h1v1h-1zM521 136h1v1h-1zM521 138h1v1h-1zM521 140h1v1h-1zM521 142h1v1h-1zM521 144h1v1h-1zM521 146h1v1h-1zM521 147h1v1h-1zM521 148h1v1h-1zM521 150h1v1h-1zM521 152h1v1h-1zM521 154h1v1h-1zM521 156h1v1h-1zM521 158h1v1h-1zM521 159h1v1h-1zM521 160h1v1h-1zM521 161h1v1h-1zM521 162h1v1h-1zM521 164h1v1h-1zM521 166h1v1h-1zM521 168h1v1h-1zM521 170h1v1h-1zM521 172h1v1h-1zM521 173h1v1h-1zM521 174h1v1h-1zM521 176h1v1h-1zM521 178h1v1h-1zM521 180h1v1h-1zM521 182h1v1h-1zM521 184h1v1h-1zM521 185h1v1h-1zM521 186h1v1h-1zM521 187h1v1h-1zM521 188h1v1h-1zM521 190h1v1h-1zM521 192h1v1h-1zM521 194h1v1h-1zM521 196h1v1h-1zM521 198h1v1h-1zM521 199h1v1h-1zM521 200h1v1h-1zM521 202h1v1h-1zM521 204h1v1h-1zM521 206h1v1h-1zM521 208h1v1h-1zM521 210h1v1h-1zM521 212h1v1h-1zM521 214h1v1h-1zM521 216h1v1h-1zM521 218h1v1h-1zM521 220h1v1h-1zM521 222h1v1h-1zM521 224h1v1h-1zM521 225h1v1h-1zM521 226h1v1h-1zM521 228h1v1h-1zM521 230h1v1h-1zM521 232h1v1h-1zM521 234h1v1h-1zM521 236h1v1h-1zM521 237h1v1h-1zM521 238h1v1h-1zM521 239h1v1h-1zM521 240h1v1h-1zM521 242h1v1h-1zM521 244h1v1h-1zM521 246h1v1h-1zM521 248h1v1h-1zM521 250h1v1h-1zM521 251h1v1h-1zM521 252h1v1h-1zM521 254h1v1h-1zM521 256h1v1h-1zM521 258h1v1h-1zM521 260h1v1h-1zM521 262h1v1h-1zM521 263h1v1h-1zM521 264h1v1h-1zM521 265h1v1h-1zM521 266h1v1h-1zM521 268h1v1h-1zM521 270h1v1h-1zM521 272h1v1h-1zM521 274h1v1h-1zM521 276h1v1h-1zM521 277h1v1h-1zM521 278h1v1h-1zM521 280h1v1h-1zM521 282h1v1h-1zM521 284h1v1h-1zM521 286h1v1h-1zM521 288h1v1h-1zM521 289h1v1h-1zM521 290h1v1h-1zM521 291h1v1h-1zM521 292h1v1h-1zM521 294h1v1h-1zM521 296h1v1h-1zM521 298h1v1h-1zM521 300h1v1h-1zM521 302h1v1h-1zM521 303h1v1h-1zM521 304h1v1h-1zM521 306h1v1h-1zM521 308h1v1h-1zM521 310h1v1h-1zM521 312h1v1h-1zM521 314h1v1h-1zM521 315h1v1h-1zM521 316h1v1h-1zM521 317h1v1h-1zM521 318h1v1h-1zM521 320h1v1h-1zM521 322h1v1h-1zM521 324h1v1h-1zM521 326h1v1h-1zM521 328h1v1h-1zM521 329h1v1h-1zM521 330h1v1h-1zM521 332h1v1h-1zM521 334h1v1h-1zM521 336h1v1h-1zM521 338h1v1h-1zM521 340h1v1h-1zM521 342h1v1h-1zM521 344h1v1h-1zM521 346h1v1h-1zM521 348h1v1h-1zM521 350h1v1h-1zM521 352h1v1h-1zM521 354h1v1h-1zM521 355h1v1h-1zM521 356h1v1h-1zM521 358h1v1h-1zM521 360h1v1h-1zM521 362h1v1h-1zM521 364h1v1h-1zM521 366h1v1h-1zM521 367h1v1h-1zM521 368h1v1h-1zM521 369h1v1h-1zM521 370h1v1h-1zM521 372h1v1h-1zM521 374h1v1h-1zM521 376h1v1h-1zM521 378h1v1h-1zM521 380h1v1h-1zM521 381h1v1h-1zM521 382h1v1h-1zM521 384h1v1h-1zM521 386h1v1h-1zM521 388h1v1h-1zM521 390h1v1h-1zM521 392h1v1h-1zM521 393h1v1h-1zM521 394h1v1h-1zM521 395h1v1h-1zM521 396h1v1h-1zM521 398h1v1h-1zM521 400h1v1h-1zM521 402h1v1h-1zM521 404h1v1h-1zM521 406h1v1h-1zM521 407h1v1h-1zM521 408h1v1h-1zM521 410h1v1h-1zM521 412h1v1h-1zM521 414h1v1h-1zM521 416h1v1h-1zM521 418h1v1h-1zM521 419h1v1h-1zM521 420h1v1h-1zM521 421h1v1h-1zM521 422h1v1h-1zM521 424h1v1h-1zM521 426h1v1h-1zM521 428h1v1h-1zM521 430h1v1h-1zM521 432h1v1h-1zM521 433h1v1h-1zM521 434h1v1h-1zM521 436h1v1h-1zM521 438h1v1h-1zM521 440h1v1h-1zM521 442h1v1h-1zM521 444h1v1h-1zM521 445h1v1h-1zM521 446h1v1h-1zM521 447h1v1h-1zM521 448h1v1h-1zM521 450h1v1h-1zM521 452h1v1h-1zM521 454h1v1h-1zM521 456h1v1h-1zM521 458h1v1h-1zM521 459h1v1h-1zM521 460h1v1h-1zM521 462h1v1h-1zM521 464h1v1h-1zM521 466h1v1h-1zM521 468h1v1h-1zM521 470h1v1h-1zM521 472h1v1h-1zM521 474h1v1h-1zM521 476h1v1h-1zM521 478h1v1h-1zM521 480h1v1h-1zM521 482h1v1h-1zM521 484h1v1h-1zM521 485h1v1h-1zM521 486h1v1h-1zM521 488h1v1h-1zM521 490h1v1h-1zM521 492h1v1h-1zM521 494h1v1h-1zM521 496h1v1h-1zM521 497h1v1h-1zM521 498h1v1h-1zM521 499h1v1h-1zM521 500h1v1h-1zM521 502h1v1h-1zM521 504h1v1h-1zM521 506h1v1h-1zM521 508h1v1h-1zM521 510h1v1h-1zM521 511h1v1h-1zM521 512h1v1h-1zM521 514h1v1h-1zM521 516h1v1h-1zM521 518h1v1h-1zM521 520h1v1h-1zM521 522h1v1h-1zM521 523h1v1h-1zM521 524h1v1h-1zM521 525h1v1h-1zM521 526h1v1h-1zM521 528h1v1h-1zM521 530h1v1h-1zM521 532h1v1h-1zM521 534h1v1h-1zM521 536h1v1h-1zM521 537h1v1h-1zM521 538h1v1h-1zM521 540h1v1h-1zM521 542h1v1h-1zM521 544h1v1h-1zM521 546h1v1h-1zM521 548h1v1h-1zM521 549h1v1h-1zM521 550h1v1h-1zM521 551h1v1h-1zM521 552h1v1h-1zM521 554h1v1h-1zM521 556h1v1h-1zM521 558h1v1h-1zM521 560h1v1h-1zM521 562h1v1h-1zM521 563h1v1h-1zM521 564h1v1h-1zM521 566h1v1h-1zM521 568h1v1h-1zM521 570h1v1h-1zM521 572h1v1h-1zM521 574h1v1h-1zM521 575h1v1h-1zM521 576h1v1h-1zM521 577h1v1h-1zM521 578h1v1h-1zM521 580h1v1h-1zM521 582h1v1h-1zM521 584h1v1h-1zM521 586h1v1h-1zM521 588h1v1h-1zM521 589h1v1h-1zM521 590h1v1h-1zM521 592h1v1h-1zM521 594h1v1h-1zM521 596h1v1h-1zM521 598h1v1h-1zM521 600h1v1h-1zM521 602h1v1h-1zM521 604h1v1h-1zM521 606h1v1h-1zM521 608h1v1h-1zM521 610h1v1h-1zM521 612h1v1h-1zM521 614h1v1h-1zM521 615h1v1h-1zM521 616h1v1h-1zM521 618h1v1h-1zM521 620h1v1h-1zM521 622h1v1h-1zM521 624h1v1h-1zM521 626h1v1h-1zM521 627h1v1h-1zM521 628h1v1h-1zM521 629h1v1h-1zM521 630h1v1h-1zM521 632h1v1h-1zM521 634h1v1h-1zM521 636h1v1h-1zM521 638h1v1h-1zM521 640h1v1h-1zM521 641h1v1h-1zM521 642h1v1h-1zM521 644h1v1h-1zM521 646h1v1h-1zM521 648h1v1h-1zM521 650h1v1h-1zM521 652h1v1h-1zM521 653h1v1h-1zM521 654h1v1h-1zM521 655h1v1h-1zM521 656h1v1h-1zM521 658h1v1h-1zM521 660h1v1h-1zM521 662h1v1h-1zM521 664h1v1h-1zM521 666h1v1h-1zM522 30h1v1h-1zM522 43h1v1h-1zM522 56h1v1h-1zM522 69h1v1h-1zM522 95h1v1h-1zM522 108h1v1h-1zM522 121h1v1h-1zM522 134h1v1h-1zM522 160h1v1h-1zM522 173h1v1h-1zM522 186h1v1h-1zM522 199h1v1h-1zM522 225h1v1h-1zM522 238h1v1h-1zM522 251h1v1h-1zM522 264h1v1h-1zM522 290h1v1h-1zM522 303h1v1h-1zM522 316h1v1h-1zM522 329h1v1h-1zM522 355h1v1h-1zM522 368h1v1h-1zM522 381h1v1h-1zM522 394h1v1h-1zM522 420h1v1h-1zM522 433h1v1h-1zM522 446h1v1h-1zM522 459h1v1h-1zM522 485h1v1h-1zM522 498h1v1h-1zM522 511h1v1h-1zM522 524h1v1h-1zM522 550h1v1h-1zM522 563h1v1h-1zM522 576h1v1h-1zM522 589h1v1h-1zM522 615h1v1h-1zM522 628h1v1h-1zM522 641h1v1h-1zM522 654h1v1h-1zM523 82h1v1h-1zM523 147h1v1h-1zM523 212h1v1h-1zM523 277h1v1h-1zM523 342h1v1h-1zM523 407h1v1h-1zM523 472h1v1h-1zM523 537h1v1h-1zM523 602h1v1h-1zM524 30h1v1h-1zM524 43h1v1h-1zM524 56h1v1h-1zM524 69h1v1h-1zM524 95h1v1h-1zM524 108h1v1h-1zM524 121h1v1h-1zM524 134h1v1h-1zM524 160h1v1h-1zM524 173h1v1h-1zM524 186h1v1h-1zM524 199h1v1h-1zM524 225h1v1h-1zM524 238h1v1h-1zM524 251h1v1h-1zM524 264h1v1h-1zM524 290h1v1h-1zM524 303h1v1h-1zM524 316h1v1h-1zM524 329h1v1h-1zM524 355h1v1h-1zM524 368h1v1h-1zM524 381h1v1h-1zM524 394h1v1h-1zM524 420h1v1h-1zM524 433h1v1h-1zM524 446h1v1h-1zM524 459h1v1h-1zM524 485h1v1h-1zM524 498h1v1h-1zM524 511h1v1h-1zM524 524h1v1h-1zM524 550h1v1h-1zM524 563h1v1h-1zM524 576h1v1h-1zM524 589h1v1h-1zM524 615h1v1h-1zM524 628h1v1h-1zM524 641h1v1h-1zM524 654h1v1h-1zM525 82h1v1h-1zM525 147h1v1h-1zM525 212h1v1h-1zM525 277h1v1h-1zM525 342h1v1h-1zM525 407h1v1h-1zM525 472h1v1h-1zM525 537h1v1h-1zM525 602h1v1h-1zM527 82h1v1h-1zM527 147h1v1h-1zM527 212h1v1h-1zM527 277h1v1h-1zM527 342h1v1h-1zM527 407h1v1h-1zM527 472h1v1h-1zM527 537h1v1h-1zM527 602h1v1h-1zM529 342h1v1h-1zM531 342h1v1h-1zM533 342h1v1h-1zM535 342h1v1h-1zM537 342h1v1h-1zM539 342h1v1h-1zM541 17h1v1h-1zM541 19h1v1h-1zM541 82h1v1h-1zM541 147h1v1h-1zM541 212h1v1h-1zM541 277h1v1h-1zM541 339h1v1h-1zM541 341h1v1h-1zM541 342h1v1h-1zM541 343h1v1h-1zM541 345h1v1h-1zM541 407h1v1h-1zM541 472h1v1h-1zM541 537h1v1h-1zM541 602h1v1h-1zM541 665h1v1h-1zM541 667h1v1h-1zM543 342h1v1h-1zM545 342h1v1h-1zM547 342h1v1h-1zM549 342h1v1h-1zM551 342h1v1h-1zM553 342h1v1h-1zM555 342h1v1h-1zM557 342h1v1h-1zM559 342h1v1h-1zM561 17h1v1h-1zM561 19h1v1h-1zM561 82h1v1h-1zM561 147h1v1h-1zM561 212h1v1h-1zM561 277h1v1h-1zM561 339h1v1h-1zM561 341h1v1h-1zM561 342h1v1h-1zM561 343h1v1h-1zM561 345h1v1h-1zM561 407h1v1h-1zM561 472h1v1h-1zM561 537h1v1h-1zM561 602h1v1h-1zM561 665h1v1h-1zM561 667h1v1h-1zM563 342h1v1h-1zM565 342h1v1h-1zM567 342h1v1h-1zM569 342h1v1h-1zM571 342h1v1h-1zM573 342h1v1h-1zM575 342h1v1h-1zM577 342h1v1h-1zM579 342h1v1h-1zM581 17h1v1h-1zM581 19h1v1h-1zM581 82h1v1h-1zM581 147h1v1h-1zM581 212h1v1h-1zM581 277h1v1h-1zM581 339h1v1h-1zM581 341h1v1h-1zM581 342h1v1h-1zM581 343h1v1h-1zM581 345h1v1h-1zM581 407h1v1h-1zM581 472h1v1h-1zM581 537h1v1h-1zM581 602h1v1h-1zM581 665h1v1h-1zM581 667h1v1h-1zM583 342h1v1h-1zM585 342h1v1h-1zM587 342h1v1h-1zM589 342h1v1h-1zM591 342h1v1h-1zM593 342h1v1h-1zM595 342h1v1h-1zM597 342h1v1h-1zM599 342h1v1h-1zM601 17h1v1h-1zM601 19h1v1h-1zM601 82h1v1h-1zM601 147h1v1h-1zM601 212h1v1h-1zM601 277h1v1h-1zM601 339h1v1h-1zM601 341h1v1h-1zM601 342h1v1h-1zM601 343h1v1h-1zM601 345h1v1h-1zM601 407h1v1h-1zM601 472h1v1h-1zM601 537h1v1h-1zM601 602h1v1h-1zM601 665h1v1h-1zM601 667h1v1h-1zM603 342h1v1h-1zM605 342h1v1h-1zM607 342h1v1h-1zM609 342h1v1h-1zM611 342h1v1h-1zM613 342h1v1h-1zM615 342h1v1h-1zM617 342h1v1h-1zM619 342h1v1h-1zM621 18h1v1h-1zM621 20h1v1h-1zM621 22h1v1h-1zM621 30h1v1h-1zM621 43h1v1h-1zM621 56h1v1h-1zM621 69h1v1h-1zM621 82h1v1h-1zM621 95h1v1h-1zM621 108h1v1h-1zM621 121h1v1h-1zM621 134h1v1h-1zM621 147h1v1h-1zM621 160h1v1h-1zM621 173h1v1h-1zM621 186h1v1h-1zM621 199h1v1h-1zM621 212h1v1h-1zM621 225h1v1h-1zM621 238h1v1h-1zM621 251h1v1h-1zM621 264h1v1h-1zM621 277h1v1h-1zM621 290h1v1h-1zM621 303h1v1h-1zM621 316h1v1h-1zM621 329h1v1h-1zM621 336h1v1h-1zM621 338h1v1h-1zM621 340h1v1h-1zM621 342h1v1h-1zM621 344h1v1h-1zM621 346h1v1h-1zM621 348h1v1h-1zM621 355h1v1h-1zM621 368h1v1h-1zM621 381h1v1h-1zM621 394h1v1h-1zM621 407h1v1h-1zM621 420h1v1h-1zM621 433h1v1h-1zM621 446h1v1h-1zM621 459h1v1h-1zM621 472h1v1h-1zM621 485h1v1h-1zM621 498h1v1h-1zM621 511h1v1h-1zM621 524h1v1h-1zM621 537h1v1h-1zM621 550h1v1h-1zM621 563h1v1h-1zM621 576h1v1h-1zM621 589h1v1h-1zM621 602h1v1h-1zM621 615h1v1h-1zM621 628h1v1h-1zM621 641h1v1h-1zM621 654h1v1h-1zM621 662h1v1h-1zM621 664h1v1h-1zM621 666h1v1h-1zM623 342h1v1h-1zM625 342h1v1h-1zM627 342h1v1h-1zM629 342h1v1h-1zM631 342h1v1h-1zM633 342h1v1h-1zM635 342h1v1h-1zM637 342h1v1h-1zM639 342h1v1h-1zM641 17h1v1h-1zM641 19h1v1h-1zM641 82h1v1h-1zM641 147h1v1h-1zM641 212h1v1h-1zM641 277h1v1h-1zM641 339h1v1h-1zM641 341h1v1h-1zM641 342h1v1h-1zM641 343h1v1h-1zM641 345h1v1h-1zM641 407h1v1h-1zM641 472h1v1h-1zM641 537h1v1h-1zM641 602h1v1h-1zM641 665h1v1h-1zM641 667h1v1h-1zM643 342h1v1h-1zM645 342h1v1h-1zM647 342h1v1h-1zM649 342h1v1h-1zM651 342h1v1h-1zM653 342h1v1h-1zM655 342h1v1h-1zM657 342h1v1h-1zM659 342h1v1h-1zM661 17h1v1h-1zM661 19h1v1h-1zM661 82h1v1h-1zM661 147h1v1h-1zM661 212h1v1h-1zM661 277h1v1h-1zM661 339h1v1h-1zM661 341h1v1h-1zM661 342h1v1h-1zM661 343h1v1h-1zM661 345h1v1h-1zM661 407h1v1h-1zM661 472h1v1h-1zM661 537h1v1h-1zM661 602h1v1h-1zM661 665h1v1h-1zM661 667h1v1h-1zM663 342h1v1h-1zM665 342h1v1h-1zM667 342h1v1h-1zM669 342h1v1h-1zM671 342h1v1h-1zM673 342h1v1h-1zM675 342h1v1h-1zM677 342h1v1h-1zM679 342h1v1h-1zM681 17h1v1h-1zM681 19h1v1h-1zM681 82h1v1h-1zM681 147h1v1h-1zM681 212h1v1h-1zM681 277h1v1h-1zM681 339h1v1h-1zM681 341h1v1h-1zM681 342h1v1h-1zM681 343h1v1h-1zM681 345h1v1h-1zM681 407h1v1h-1zM681 472h1v1h-1zM681 537h1v1h-1zM681 602h1v1h-1zM681 665h1v1h-1zM681 667h1v1h-1zM683 342h1v1h-1zM685 342h1v1h-1zM687 342h1v1h-1zM689 342h1v1h-1zM691 342h1v1h-1zM693 342h1v1h-1zM695 342h1v1h-1zM697 342h1v1h-1zM699 342h1v1h-1zM701 17h1v1h-1zM701 19h1v1h-1zM701 82h1v1h-1zM701 147h1v1h-1zM701 212h1v1h-1zM701 277h1v1h-1zM701 339h1v1h-1zM701 341h1v1h-1zM701 342h1v1h-1zM701 343h1v1h-1zM701 345h1v1h-1zM701 407h1v1h-1zM701 472h1v1h-1zM701 537h1v1h-1zM701 602h1v1h-1zM701 665h1v1h-1zM701 667h1v1h-1zM703 342h1v1h-1zM705 342h1v1h-1zM707 342h1v1h-1zM709 342h1v1h-1zM711 342h1v1h-1zM713 342h1v1h-1zM715 342h1v1h-1zM717 342h1v1h-1zM719 342h1v1h-1zM721 18h1v1h-1zM721 20h1v1h-1zM721 22h1v1h-1zM721 30h1v1h-1zM721 43h1v1h-1zM721 56h1v1h-1zM721 69h1v1h-1zM721 82h1v1h-1zM721 95h1v1h-1zM721 108h1v1h-1zM721 121h1v1h-1zM721 134h1v1h-1zM721 147h1v1h-1zM721 160h1v1h-1zM721 173h1v1h-1zM721 186h1v1h-1zM721 199h1v1h-1zM721 212h1v1h-1zM721 225h1v1h-1zM721 238h1v1h-1zM721 251h1v1h-1zM721 264h1v1h-1zM721 277h1v1h-1zM721 290h1v1h-1zM721 303h1v1h-1zM721 316h1v1h-1zM721 329h1v1h-1zM721 336h1v1h-1zM721 338h1v1h-1zM721 340h1v1h-1zM721 342h1v1h-1zM721 344h1v1h-1zM721 346h1v1h-1zM721 348h1v1h-1zM721 355h1v1h-1zM721 368h1v1h-1zM721 381h1v1h-1zM721 394h1v1h-1zM721 407h1v1h-1zM721 420h1v1h-1zM721 433h1v1h-1zM721 446h1v1h-1zM721 459h1v1h-1zM721 472h1v1h-1zM721 485h1v1h-1zM721 498h1v1h-1zM721 511h1v1h-1zM721 524h1v1h-1zM721 537h1v1h-1zM721 550h1v1h-1zM721 563h1v1h-1zM721 576h1v1h-1zM721 589h1v1h-1zM721 602h1v1h-1zM721 615h1v1h-1zM721 628h1v1h-1zM721 641h1v1h-1zM721 654h1v1h-1zM721 662h1v1h-1zM721 664h1v1h-1zM721 666h1v1h-1zM723 342h1v1h-1zM725 342h1v1h-1zM727 342h1v1h-1zM729 342h1v1h-1zM731 342h1v1h-1zM733 342h1v1h-1zM735 342h1v1h-1zM737 342h1v1h-1zM739 342h1v1h-1zM741 17h1v1h-1zM741 19h1v1h-1zM741 82h1v1h-1zM741 147h1v1h-1zM741 212h1v1h-1zM741 277h1v1h-1zM741 339h1v1h-1zM741 341h1v1h-1zM741 342h1v1h-1zM741 343h1v1h-1zM741 345h1v1h-1zM741 407h1v1h-1zM741 472h1v1h-1zM741 537h1v1h-1zM741 602h1v1h-1zM741 665h1v1h-1zM741 667h1v1h-1zM743 342h1v1h-1zM745 342h1v1h-1zM747 342h1v1h-1zM749 342h1v1h-1zM751 342h1v1h-1zM753 342h1v1h-1zM755 342h1v1h-1zM757 342h1v1h-1zM759 342h1v1h-1zM761 17h1v1h-1zM761 19h1v1h-1zM761 82h1v1h-1zM761 147h1v1h-1zM761 212h1v1h-1zM761 277h1v1h-1zM761 339h1v1h-1zM761 341h1v1h-1zM761 342h1v1h-1zM761 343h1v1h-1zM761 345h1v1h-1zM761 407h1v1h-1zM761 472h1v1h-1zM761 537h1v1h-1zM761 602h1v1h-1zM761 665h1v1h-1zM761 667h1v1h-1zM763 342h1v1h-1zM765 342h1v1h-1zM767 342h1v1h-1zM769 342h1v1h-1zM771 342h1v1h-1zM773 342h1v1h-1zM775 342h1v1h-1zM777 342h1v1h-1zM779 342h1v1h-1zM781 17h1v1h-1zM781 19h1v1h-1zM781 82h1v1h-1zM781 147h1v1h-1zM781 212h1v1h-1zM781 277h1v1h-1zM781 339h1v1h-1zM781 341h1v1h-1zM781 342h1v1h-1zM781 343h1v1h-1zM781 345h1v1h-1zM781 407h1v1h-1zM781 472h1v1h-1zM781 537h1v1h-1zM781 602h1v1h-1zM781 665h1v1h-1zM781 667h1v1h-1zM783 342h1v1h-1zM785 342h1v1h-1zM787 342h1v1h-1zM789 342h1v1h-1zM791 342h1v1h-1zM793 342h1v1h-1zM795 342h1v1h-1zM797 342h1v1h-1zM799 342h1v1h-1zM801 17h1v1h-1zM801 19h1v1h-1zM801 82h1v1h-1zM801 147h1v1h-1zM801 212h1v1h-1zM801 277h1v1h-1zM801 339h1v1h-1zM801 341h1v1h-1zM801 342h1v1h-1zM801 343h1v1h-1zM801 345h1v1h-1zM801 407h1v1h-1zM801 472h1v1h-1zM801 537h1v1h-1zM801 602h1v1h-1zM801 665h1v1h-1zM801 667h1v1h-1zM803 342h1v1h-1zM805 342h1v1h-1zM807 342h1v1h-1zM809 342h1v1h-1zM811 342h1v1h-1zM813 342h1v1h-1zM815 342h1v1h-1zM817 342h1v1h-1zM819 342h1v1h-1zM821 18h1v1h-1zM821 20h1v1h-1zM821 22h1v1h-1zM821 30h1v1h-1zM821 43h1v1h-1zM821 56h1v1h-1zM821 69h1v1h-1zM821 82h1v1h-1zM821 95h1v1h-1zM821 108h1v1h-1zM821 121h1v1h-1zM821 134h1v1h-1zM821 147h1v1h-1zM821 160h1v1h-1zM821 173h1v1h-1zM821 186h1v1h-1zM821 199h1v1h-1zM821 212h1v1h-1zM821 225h1v1h-1zM821 238h1v1h-1zM821 251h1v1h-1zM821 264h1v1h-1zM821 277h1v1h-1zM821 290h1v1h-1zM821 303h1v1h-1zM821 316h1v1h-1zM821 329h1v1h-1zM821 336h1v1h-1zM821 338h1v1h-1zM821 340h1v1h-1zM821 342h1v1h-1zM821 344h1v1h-1zM821 346h1v1h-1zM821 348h1v1h-1zM821 355h1v1h-1zM821 368h1v1h-1zM821 381h1v1h-1zM821 394h1v1h-1zM821 407h1v1h-1zM821 420h1v1h-1zM821 433h1v1h-1zM821 446h1v1h-1zM821 459h1v1h-1zM821 472h1v1h-1zM821 485h1v1h-1zM821 498h1v1h-1zM821 511h1v1h-1zM821 524h1v1h-1zM821 537h1v1h-1zM821 550h1v1h-1zM821 563h1v1h-1zM821 576h1v1h-1zM821 589h1v1h-1zM821 602h1v1h-1zM821 615h1v1h-1zM821 628h1v1h-1zM821 641h1v1h-1zM821 654h1v1h-1zM821 662h1v1h-1zM821 664h1v1h-1zM821 666h1v1h-1zM823 342h1v1h-1zM825 342h1v1h-1zM827 342h1v1h-1zM829 342h1v1h-1zM831 342h1v1h-1zM833 342h1v1h-1zM835 342h1v1h-1zM837 342h1v1h-1zM839 342h1v1h-1zM841 17h1v1h-1zM841 19h1v1h-1zM841 82h1v1h-1zM841 147h1v1h-1zM841 212h1v1h-1zM841 277h1v1h-1zM841 339h1v1h-1zM841 341h1v1h-1zM841 342h1v1h-1zM841 343h1v1h-1zM841 345h1v1h-1zM841 407h1v1h-1zM841 472h1v1h-1zM841 537h1v1h-1zM841 602h1v1h-1zM841 665h1v1h-1zM841 667h1v1h-1zM843 342h1v1h-1zM845 342h1v1h-1zM847 342h1v1h-1zM849 342h1v1h-1zM851 342h1v1h-1zM853 342h1v1h-1zM855 342h1v1h-1zM857 342h1v1h-1zM859 342h1v1h-1zM861 17h1v1h-1zM861 19h1v1h-1zM861 82h1v1h-1zM861 147h1v1h-1zM861 212h1v1h-1zM861 277h1v1h-1zM861 339h1v1h-1zM861 341h1v1h-1zM861 342h1v1h-1zM861 343h1v1h-1zM861 345h1v1h-1zM861 407h1v1h-1zM861 472h1v1h-1zM861 537h1v1h-1zM861 602h1v1h-1zM861 665h1v1h-1zM861 667h1v1h-1zM863 342h1v1h-1zM865 342h1v1h-1zM867 342h1v1h-1zM869 342h1v1h-1zM871 342h1v1h-1zM873 342h1v1h-1zM875 342h1v1h-1zM877 342h1v1h-1zM879 342h1v1h-1zM881 17h1v1h-1zM881 19h1v1h-1zM881 82h1v1h-1zM881 147h1v1h-1zM881 212h1v1h-1zM881 277h1v1h-1zM881 339h1v1h-1zM881 341h1v1h-1zM881 342h1v1h-1zM881 343h1v1h-1zM881 345h1v1h-1zM881 407h1v1h-1zM881 472h1v1h-1zM881 537h1v1h-1zM881 602h1v1h-1zM881 665h1v1h-1zM881 667h1v1h-1zM883 342h1v1h-1zM885 342h1v1h-1zM887 342h1v1h-1zM889 342h1v1h-1zM891 342h1v1h-1zM893 342h1v1h-1zM895 342h1v1h-1zM897 342h1v1h-1zM899 342h1v1h-1zM901 17h1v1h-1zM901 19h1v1h-1zM901 82h1v1h-1zM901 147h1v1h-1zM901 212h1v1h-1zM901 277h1v1h-1zM901 339h1v1h-1zM901 341h1v1h-1zM901 342h1v1h-1zM901 343h1v1h-1zM901 345h1v1h-1zM901 407h1v1h-1zM901 472h1v1h-1zM901 537h1v1h-1zM901 602h1v1h-1zM901 665h1v1h-1zM901 667h1v1h-1zM903 342h1v1h-1zM905 342h1v1h-1zM907 342h1v1h-1zM909 342h1v1h-1zM911 342h1v1h-1zM913 342h1v1h-1zM915 342h1v1h-1zM917 342h1v1h-1zM919 342h1v1h-1zM921 18h1v1h-1zM921 20h1v1h-1zM921 22h1v1h-1zM921 30h1v1h-1zM921 43h1v1h-1zM921 56h1v1h-1zM921 69h1v1h-1zM921 82h1v1h-1zM921 95h1v1h-1zM921 108h1v1h-1zM921 121h1v1h-1zM921 134h1v1h-1zM921 147h1v1h-1zM921 160h1v1h-1zM921 173h1v1h-1zM921 186h1v1h-1zM921 199h1v1h-1zM921 212h1v1h-1zM921 225h1v1h-1zM921 238h1v1h-1zM921 251h1v1h-1zM921 264h1v1h-1zM921 277h1v1h-1zM921 290h1v1h-1zM921 303h1v1h-1zM921 316h1v1h-1zM921 329h1v1h-1zM921 336h1v1h-1zM921 338h1v1h-1zM921 340h1v1h-1zM921 342h1v1h-1zM921 344h1v1h-1zM921 346h1v1h-1zM921 348h1v1h-1zM921 355h1v1h-1zM921 368h1v1h-1zM921 381h1v1h-1zM921 394h1v1h-1zM921 407h1v1h-1zM921 420h1v1h-1zM921 433h1v1h-1zM921 446h1v1h-1zM921 459h1v1h-1zM921 472h1v1h-1zM921 485h1v1h-1zM921 498h1v1h-1zM921 511h1v1h-1zM921 524h1v1h-1zM921 537h1v1h-1zM921 550h1v1h-1zM921 563h1v1h-1zM921 576h1v1h-1zM921 589h1v1h-1zM921 602h1v1h-1zM921 615h1v1h-1zM921 628h1v1h-1zM921 641h1v1h-1zM921 654h1v1h-1zM921 662h1v1h-1zM921 664h1v1h-1zM921 666h1v1h-1zM923 342h1v1h-1zM925 342h1v1h-1zM927 342h1v1h-1zM929 342h1v1h-1zM931 342h1v1h-1zM933 342h1v1h-1zM935 342h1v1h-1zM937 342h1v1h-1zM939 342h1v1h-1zM941 17h1v1h-1zM941 19h1v1h-1zM941 82h1v1h-1zM941 147h1v1h-1zM941 212h1v1h-1zM941 277h1v1h-1zM941 339h1v1h-1zM941 341h1v1h-1zM941 342h1v1h-1zM941 343h1v1h-1zM941 345h1v1h-1zM941 407h1v1h-1zM941 472h1v1h-1zM941 537h1v1h-1zM941 602h1v1h-1zM941 665h1v1h-1zM941 667h1v1h-1zM943 342h1v1h-1zM945 342h1v1h-1zM947 342h1v1h-1zM949 342h1v1h-1zM951 342h1v1h-1zM953 342h1v1h-1zM955 342h1v1h-1zM957 342h1v1h-1zM959 342h1v1h-1zM961 17h1v1h-1zM961 19h1v1h-1zM961 82h1v1h-1zM961 147h1v1h-1zM961 212h1v1h-1zM961 277h1v1h-1zM961 339h1v1h-1zM961 341h1v1h-1zM961 342h1v1h-1zM961 343h1v1h-1zM961 345h1v1h-1zM961 407h1v1h-1zM961 472h1v1h-1zM961 537h1v1h-1zM961 602h1v1h-1zM961 665h1v1h-1zM961 667h1v1h-1zM963 342h1v1h-1zM965 342h1v1h-1zM967 342h1v1h-1zM969 342h1v1h-1zM971 342h1v1h-1zM973 342h1v1h-1zM975 342h1v1h-1zM977 342h1v1h-1zM979 342h1v1h-1zM981 17h1v1h-1zM981 19h1v1h-1zM981 82h1v1h-1zM981 147h1v1h-1zM981 212h1v1h-1zM981 277h1v1h-1zM981 339h1v1h-1zM981 341h1v1h-1zM981 342h1v1h-1zM981 343h1v1h-1zM981 345h1v1h-1zM981 407h1v1h-1zM981 472h1v1h-1zM981 537h1v1h-1zM981 602h1v1h-1zM981 665h1v1h-1zM981 667h1v1h-1zM983 342h1v1h-1zM985 342h1v1h-1zM987 342h1v1h-1zM989 342h1v1h-1zM991 342h1v1h-1zM993 342h1v1h-1zM995 342h1v1h-1zM997 342h1v1h-1zM999 342h1v1h-1zM1001 17h1v1h-1zM1001 19h1v1h-1zM1001 82h1v1h-1zM1001 147h1v1h-1zM1001 212h1v1h-1zM1001 277h1v1h-1zM1001 339h1v1h-1zM1001 341h1v1h-1zM1001 342h1v1h-1zM1001 343h1v1h-1zM1001 345h1v1h-1zM1001 407h1v1h-1zM1001 472h1v1h-1zM1001 537h1v1h-1zM1001 602h1v1h-1zM1001 665h1v1h-1zM1001 667h1v1h-1zM1003 342h1v1h-1zM1005 342h1v1h-1zM1007 342h1v1h-1zM1009 342h1v1h-1zM1011 342h1v1h-1zM1013 342h1v1h-1zM1015 82h1v1h-1zM1015 147h1v1h-1zM1015 212h1v1h-1zM1015 277h1v1h-1zM1015 342h1v1h-1zM1015 407h1v1h-1zM1015 472h1v1h-1zM1015 537h1v1h-1zM1015 602h1v1h-1zM1017 82h1v1h-1zM1017 147h1v1h-1zM1017 212h1v1h-1zM1017 277h1v1h-1zM1017 342h1v1h-1zM1017 407h1v1h-1zM1017 472h1v1h-1zM1017 537h1v1h-1zM1017 602h1v1h-1zM1018 30h1v1h-1zM1018 43h1v1h-1zM1018 56h1v1h-1zM1018 69h1v1h-1zM1018 95h1v1h-1zM1018 108h1v1h-1zM1018 121h1v1h-1zM1018 134h1v1h-1zM1018 160h1v1h-1zM1018 173h1v1h-1zM1018 186h1v1h-1zM1018 199h1v1h-1zM1018 225h1v1h-1zM1018 238h1v1h-1zM1018 251h1v1h-1zM1018 264h1v1h-1zM1018 290h1v1h-1zM1018 303h1v1h-1zM1018 316h1v1h-1zM1018 329h1v1h-1zM1018 355h1v1h-1zM1018 368h1v1h-1zM1018 381h1v1h-1zM1018 394h1v1h-1zM1018 420h1v1h-1zM1018 433h1v1h-1zM1018 446h1v1h-1zM1018 459h1v1h-1zM1018 485h1v1h-1zM1018 498h1v1h-1zM1018 511h1v1h-1zM1018 524h1v1h-1zM1018 550h1v1h-1zM1018 563h1v1h-1zM1018 576h1v1h-1zM1018 589h1v1h-1zM1018 615h1v1h-1zM1018 628h1v1h-1zM1018 641h1v1h-1zM1018 654h1v1h-1zM1019 82h1v1h-1zM1019 147h1v1h-1zM1019 212h1v1h-1zM1019 277h1v1h-1zM1019 342h1v1h-1zM1019 407h1v1h-1zM1019 472h1v1h-1zM1019 537h1v1h-1zM1019 602h1v1h-1zM1020 30h1v1h-1zM1020 43h1v1h-1zM1020 56h1v1h-1zM1020 69h1v1h-1zM1020 95h1v1h-1zM1020 108h1v1h-1zM1020 121h1v1h-1zM1020 134h1v1h-1zM1020 160h1v1h-1zM1020 173h1v1h-1zM1020 186h1v1h-1zM1020 199h1v1h-1zM1020 225h1v1h-1zM1020 238h1v1h-1zM1020 251h1v1h-1zM1020 264h1v1h-1zM1020 290h1v1h-1zM1020 303h1v1h-1zM1020 316h1v1h-1zM1020 329h1v1h-1zM1020 355h1v1h-1zM1020 368h1v1h-1zM1020 381h1v1h-1zM1020 394h1v1h-1zM1020 420h1v1h-1zM1020 433h1v1h-1zM1020 446h1v1h-1zM1020 459h1v1h-1zM1020 485h1v1h-1zM1020 498h1v1h-1zM1020 511h1v1h-1zM1020 524h1v1h-1zM1020 550h1v1h-1zM1020 563h1v1h-1zM1020 576h1v1h-1zM1020 589h1v1h-1zM1020 615h1v1h-1zM1020 628h1v1h-1zM1020 641h1v1h-1zM1020 654h1v1h-1z"/>
</svg>
<svg width="1024" height="768" style="will-change:transform">
<text x="-1" y="15" fill="#000" font-size="21" letter-spacing="0" font-weight="bold" font-family="Liberation Serif" textLength="31" lengthAdjust="spacingAndGlyphs">Tek</text>
<text x="34" y="14" fill="#fff" font-size="16" letter-spacing="1.4" font-weight="normal" font-family="Liberation Sans"  stroke="#fff" stroke-width="0.25">Stop</text>
<path fill="#ff9c00" d="M518 1h8l-4 4z"/>
<path fill="#ff9c00" d="M516 7q0-2 2-2h5q2 0 2 2v8h-9z"/>
<path fill="#000" d="M518 7h5v1.5h-1.75v6h-1.5v-6h-1.75z"/>
<path fill="#ff9c00" d="M516 17h11l-5.5 6z"/>
<path fill="#ff9c00" d="M514 27q0-3 3-3h7q3 0 3 3v8l-6.5 4l-6.5-4z"/>
<path fill="#000" d="M515 25h10v2h-4v9h-2v-9h-4z"/>
<path fill="#f6f600" d="M1010 156.5l6-6v12z"/><rect x="1016" y="156" width="5" height="1" fill="#f6f600"/>
<polygon points="0,251 1,250 12,250 20,258 20,259 12,267 1,267 0,266" fill="#f6f600"/><polygon points="1.5,251.5 11.5,251.5 18,258.5 11.5,265.5 1.5,265.5" fill="#000"/><path fill="#f6f600" d="M7 253h2v11h-2v-8.2l-2 1.6v-2.2z"/>
<polygon points="0,434 1,433 12,433 20,441 20,442 12,450 1,450 0,449" fill="#00f4f4"/><polygon points="1.5,434.5 11.5,434.5 18,441.5 11.5,448.5 1.5,448.5" fill="#000"/><path fill="none" stroke="#00f4f4" stroke-width="1.7" d="M5 439q0-2 2.5-2q2.5 0 2.5 2.2q0 1.3-1.2 2.6l-4.3 4.2h6.2"/>
<polygon points="0,633 1,632 12,632 20,640 20,641 12,649 1,649 0,648" fill="#000"/><polygon points="0,633 1,632 12,632 19.5,640 12,648 1,648 0,647" fill="#10a010"/><rect x="1" y="632" width="12" height="1" fill="#c8c8c0"/><path fill="#000" d="M9 635h2v11h-2z M4 641h8v2h-8z"/><path fill="none" stroke="#000" stroke-width="1.3" d="M4.8 641.8L9.6 635.6"/>
<text x="24" y="263" fill="#fff" font-size="16" letter-spacing="1.0" font-weight="normal" font-family="Liberation Sans"  stroke="#fff" stroke-width="0.25">VDIM</text>
<rect x="21" y="433" width="27" height="15" fill="#000"/>
<text x="23" y="446" fill="#fff" font-size="16" letter-spacing="-0.5" font-weight="normal" font-family="Liberation Sans"  stroke="#fff" stroke-width="0.25">SW</text>
<text x="24" y="645" fill="#fff" font-size="16" letter-spacing="0.9" font-weight="normal" font-family="Liberation Sans"  stroke="#fff" stroke-width="0.25">IOUT</text>
<rect x="20.5" y="670.5" width="554" height="20" rx="6" ry="6" fill="#000" stroke="#d8d8d8" stroke-width="1"/>
<rect x="26" y="673" width="26" height="16" rx="7" ry="7.5" fill="#f6f600"/><path fill="#000" d="M38 675h2v11h-2v-8.2l-2 1.6v-2.2z"/>
<text x="68" y="686" fill="#f6f600" font-size="16" letter-spacing="0.9" font-weight="normal" font-family="Liberation Sans"  stroke="#f6f600" stroke-width="0.25">2.00 V</text>
<path fill="#f6f600" d="M144 675h1v8h-1zM145 675h3v1h-3zM145 678h3v1h-3zM145 682h3v1h-3zM148 676h1v2h-1zM148 679h1v3h-1zM148 679h1v6h-1zM150 681h1v4h-1zM152 679h1v6h-1zM149 685h1v2h-1zM151 685h1v2h-1z"/>
<rect x="165" y="673" width="26" height="16" rx="7" ry="7.5" fill="#00f4f4"/><path fill="none" stroke="#000" stroke-width="1.7" d="M175 678q0-2 2.5-2q2.5 0 2.5 2.2q0 1.3-1.2 2.6l-4.3 4.2h6.2"/>
<text x="206" y="686" fill="#00f4f4" font-size="16" letter-spacing="1.1" font-weight="normal" font-family="Liberation Sans"  stroke="#00f4f4" stroke-width="0.25">5.00 V</text>
<path fill="#00f4f4" d="M283 675h1v8h-1zM284 675h3v1h-3zM284 678h3v1h-3zM284 682h3v1h-3zM287 676h1v2h-1zM287 679h1v3h-1zM287 679h1v6h-1zM289 681h1v4h-1zM291 679h1v6h-1zM288 685h1v2h-1zM290 685h1v2h-1z"/>
<rect x="443" y="673" width="26" height="16" rx="7" ry="7.5" fill="#00a000"/><path fill="#000" d="M457 675h2v11h-2z M452 681h8v2h-8z"/><path fill="none" stroke="#000" stroke-width="1.3" d="M452.8 681.8L457.6 675.6"/>
<path fill="none" stroke="#00c000" stroke-width="1.5" d="M478.5 675v8"/><path fill="#00c000" d="M474.5 681h8l-4 5z"/>
<text x="485" y="686" fill="#00c000" font-size="16" letter-spacing="1.0" font-weight="normal" font-family="Liberation Sans"  stroke="#00c000" stroke-width="0.25">200mA</text>
<path fill="#00c000" d="M561 675h1v8h-1zM562 675h3v1h-3zM562 678h3v1h-3zM562 682h3v1h-3zM565 676h1v2h-1zM565 679h1v3h-1zM565 679h1v6h-1zM567 681h1v4h-1zM569 679h1v6h-1zM566 685h1v2h-1zM568 685h1v2h-1z"/>
<rect x="584.5" y="670.5" width="147" height="37" rx="7" ry="7" fill="#000" stroke="#d8d8d8" stroke-width="1"/>
<text x="590" y="686" fill="#fff" font-size="16" letter-spacing="0.9" font-weight="normal" font-family="Liberation Sans"  stroke="#fff" stroke-width="0.25">4.00ms</text>
<rect x="589" y="691" width="12" height="13" rx="2" fill="#ff9c00"/><path fill="#000" d="M591 693h8v2h-3v8h-2v-8h-3z"/>
<path fill="#ff9c00" d="M602 697h6v-3l4 3.5l-4 3.5v-3h-6z"/><path fill="#ff9c00" d="M612 694h12l-6 6z"/>
<text x="624" y="703" fill="#ff9c00" font-size="16" letter-spacing="1.3" font-weight="normal" font-family="Liberation Sans"  stroke="#ff9c00" stroke-width="0.25">52.0000µs</text>
<rect x="741.5" y="670.5" width="106" height="37" rx="7" ry="7" fill="#000" stroke="#d8d8d8" stroke-width="1"/>
<text x="747" y="686" fill="#fff" font-size="16" letter-spacing="1.2" font-weight="normal" font-family="Liberation Sans"  stroke="#fff" stroke-width="0.25">250MS/s</text>
<text x="747" y="703" fill="#fff" font-size="16" letter-spacing="1.5" font-weight="normal" font-family="Liberation Sans"  stroke="#fff" stroke-width="0.25">10M points</text>
<rect x="857.5" y="670.5" width="164" height="37" rx="7" ry="7" fill="#000" stroke="#d8d8d8" stroke-width="1"/>
<rect x="889" y="673" width="26" height="16" rx="7" ry="7.5" fill="#f6f600"/><path fill="#000" d="M901 675h2v11h-2v-8.2l-2 1.6v-2.2z"/>
<path fill="none" stroke="#fff" stroke-width="2" d="M928 685h4l3.5-9h4.5"/>
<text x="962" y="686" fill="#fff" font-size="16" letter-spacing="0.7" font-weight="normal" font-family="Liberation Sans"  stroke="#fff" stroke-width="0.25">3.12 V</text>
<rect x="909.5" y="729.5" width="112" height="36" rx="7" ry="7" fill="#000" stroke="#d8d8d8" stroke-width="1"/>
<text x="925" y="746" fill="#fff" font-size="16" letter-spacing="1.1" font-weight="normal" font-family="Liberation Sans"  stroke="#fff" stroke-width="0.25">3 Nov 2022</text>
<text x="916" y="762" fill="#fff" font-size="16" letter-spacing="1.0" font-weight="normal" font-family="Liberation Sans"  stroke="#fff" stroke-width="0.25">16:56:14</text>
<rect x="21" y="716" width="113" height="52" rx="4" fill="#000"/>
<rect x="20" y="714" width="113" height="53" rx="4" fill="#a8d8ff"/>
<rect x="21" y="716" width="112" height="51" rx="3" fill="#5386e2"/>
<text x="32" y="738" fill="#000" font-size="16" letter-spacing="1.0" font-weight="normal" font-family="Liberation Sans"  stroke="#000" stroke-width="0.3">Utility Page</text>
<rect x="51" y="742" width="53" height="16" fill="#c8cce8"/>
<text x="52" y="755" fill="#000" font-size="16" letter-spacing="1.0" font-weight="normal" font-family="Liberation Sans"  stroke="#000" stroke-width="0.3">Config</text>
<rect x="139" y="716" width="113" height="52" rx="4" fill="#000"/>
<rect x="138" y="714" width="113" height="53" rx="4" fill="#a8d8ff"/>
<rect x="139" y="716" width="112" height="51" rx="3" fill="#5386e2"/>
<text x="159" y="738" fill="#000" font-size="16" letter-spacing="0.4" font-weight="normal" font-family="Liberation Sans"  stroke="#000" stroke-width="0.3">Language</text>
<rect x="166" y="742" width="59" height="16" fill="#c8cce8"/>
<text x="166" y="755" fill="#000" font-size="16" letter-spacing="1.1" font-weight="normal" font-family="Liberation Sans"  stroke="#000" stroke-width="0.3">English</text>
<rect x="257" y="716" width="113" height="52" rx="4" fill="#000"/>
<rect x="256" y="714" width="113" height="53" rx="4" fill="#a8d8ff"/>
<rect x="257" y="716" width="112" height="51" rx="3" fill="#5386e2"/>
<text x="281" y="738" fill="#000" font-size="16" letter-spacing="0.4" font-weight="normal" font-family="Liberation Sans"  stroke="#000" stroke-width="0.3">Set Date</text>
<text x="286" y="755" fill="#000" font-size="16" letter-spacing="1.0" font-weight="normal" font-family="Liberation Sans"  stroke="#000" stroke-width="0.3">&amp; Time</text>
<rect x="375" y="716" width="113" height="52" rx="4" fill="#000"/>
<rect x="374" y="714" width="113" height="53" rx="4" fill="#a8d8ff"/>
<rect x="375" y="716" width="112" height="51" rx="3" fill="#5386e2"/>
<text x="391" y="729" fill="#000" font-size="16" letter-spacing="0.7" font-weight="normal" font-family="Liberation Sans"  stroke="#000" stroke-width="0.3">TekSecure</text>
<text x="411" y="746" fill="#000" font-size="16" letter-spacing="-0.2" font-weight="normal" font-family="Liberation Sans"  stroke="#000" stroke-width="0.3">Erase</text>
<text x="399" y="763" fill="#000" font-size="16" letter-spacing="1.3" font-weight="normal" font-family="Liberation Sans"  stroke="#000" stroke-width="0.3">Memory</text>
<rect x="493" y="716" width="113" height="52" rx="4" fill="#000"/>
<rect x="492" y="714" width="113" height="53" rx="4" fill="#a8d8ff"/>
<rect x="493" y="716" width="112" height="51" rx="3" fill="#5386e2"/>
<text x="525" y="746" fill="#000" font-size="16" letter-spacing="1.9" font-weight="normal" font-family="Liberation Sans"  stroke="#000" stroke-width="0.3">About</text>
<rect x="611" y="716" width="113" height="52" rx="4" fill="#000"/>
<rect x="610" y="714" width="113" height="53" rx="4" fill="#a8d8ff"/>
<rect x="611" y="716" width="112" height="51" rx="3" fill="#5386e2"/>
<text x="622" y="729" fill="#000" font-size="16" letter-spacing="1.4" font-weight="normal" font-family="Liberation Sans"  stroke="#000" stroke-width="0.3">Application</text>
<text x="638" y="746" fill="#000" font-size="16" letter-spacing="1.3" font-weight="normal" font-family="Liberation Sans"  stroke="#000" stroke-width="0.3">Module</text>
<text x="635" y="763" fill="#000" font-size="16" letter-spacing="0.3" font-weight="normal" font-family="Liberation Sans"  stroke="#000" stroke-width="0.3">Licenses</text>
</svg>
</body></html>
